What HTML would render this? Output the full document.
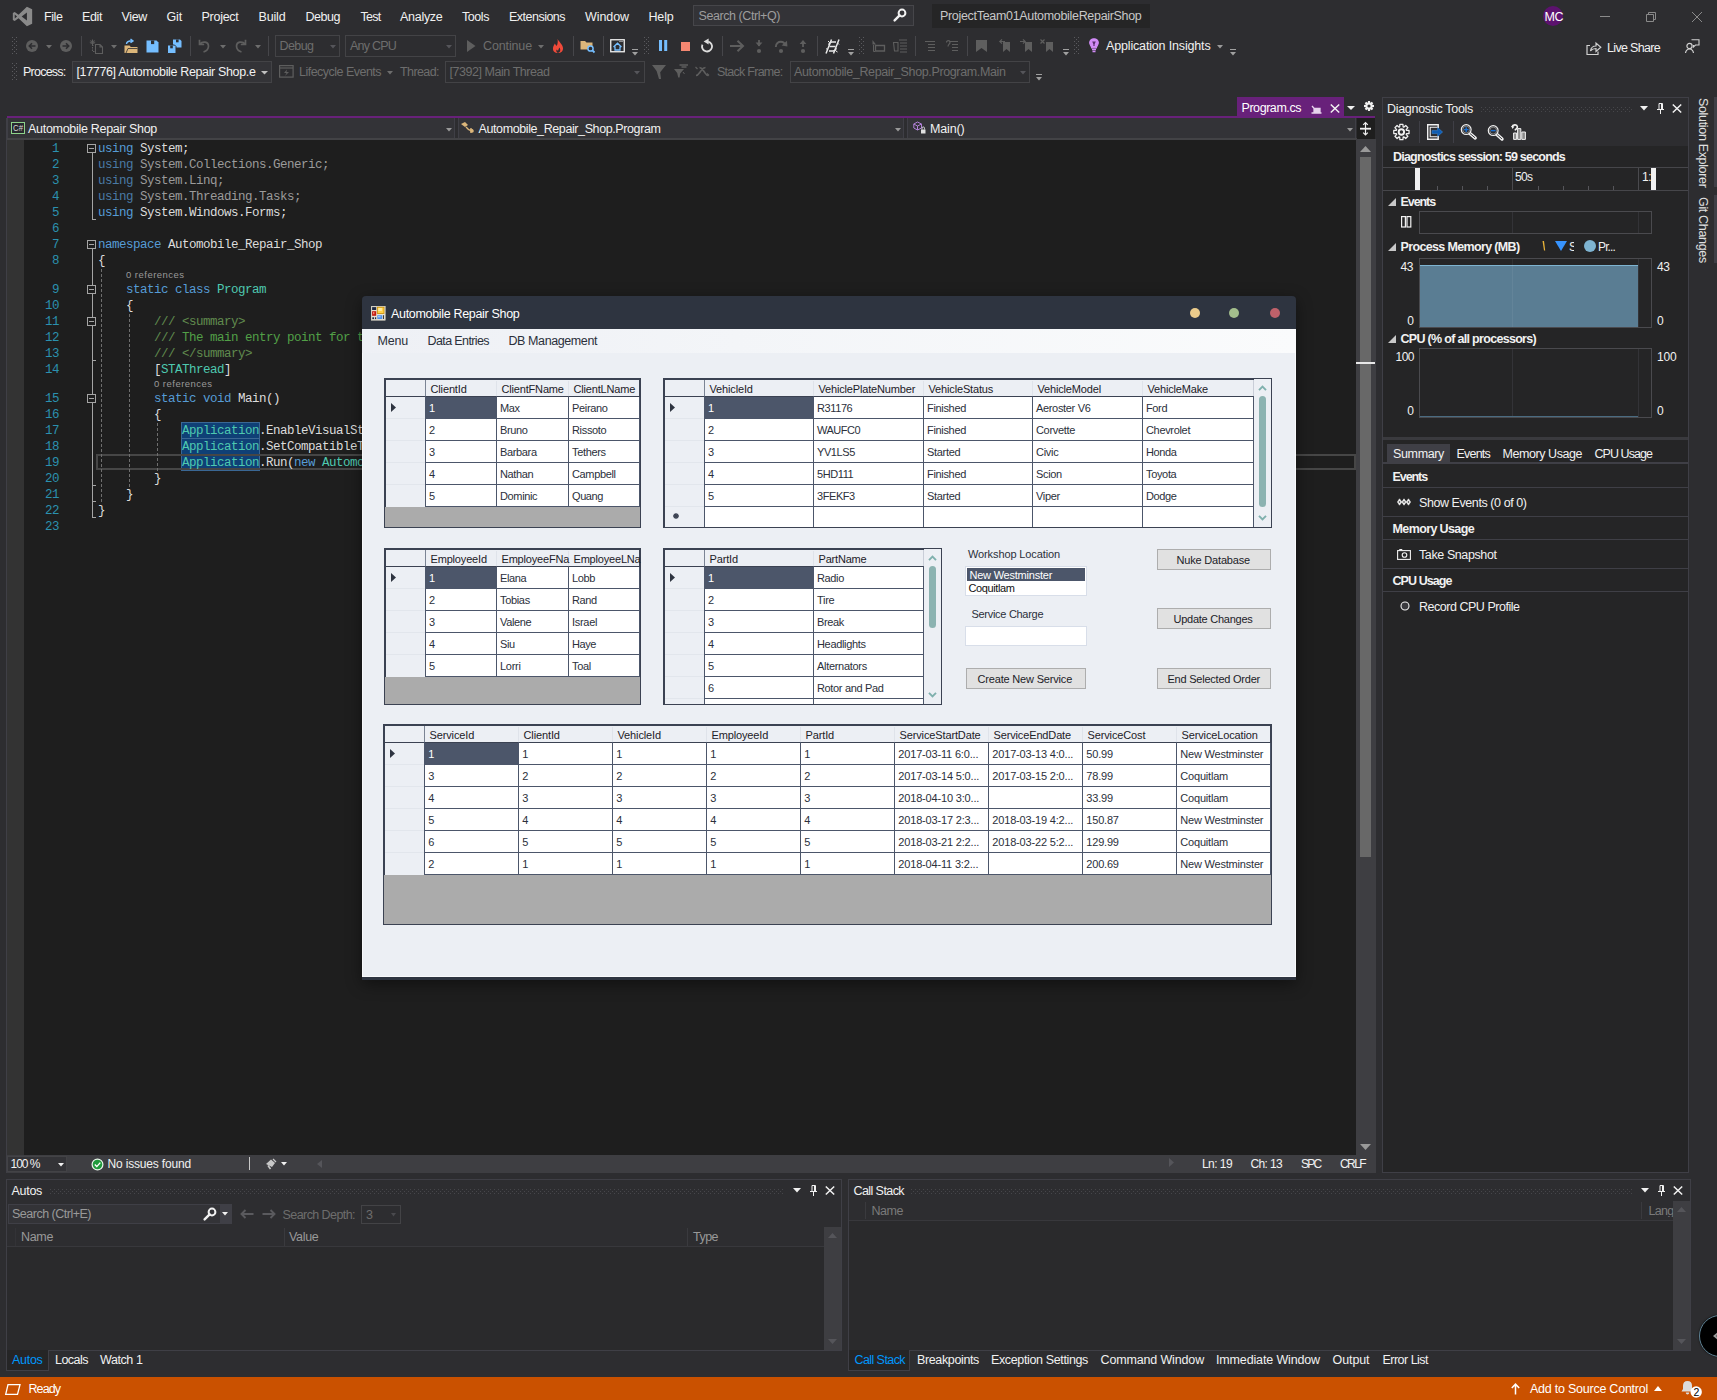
<!DOCTYPE html>
<html><head><meta charset="utf-8"><title>VS</title>
<style>
html,body{margin:0;padding:0;}
body{width:1717px;height:1400px;background:#2d2d30;overflow:hidden;position:relative;font-family:"Liberation Sans",sans-serif;font-size:12px;color:#f1f1f1;}
div,svg{position:absolute;box-sizing:border-box;}
svg{overflow:visible;}
</style></head><body>
<svg style="left:11.5px;top:5.5px;" width="21" height="21" viewBox="0 0 20 20"><path d="M14.2 0.8 L19.2 3 V17 L14.2 19.2 L6.2 11.6 L2.6 14.4 L0.8 13.4 V6.6 L2.6 5.6 L6.2 8.4 Z M14.2 6.2 L9.2 10 L14.2 13.8 Z M2.6 8 V12 L4.8 10 Z" fill="#8a8a8a" fill-rule="evenodd"/></svg>
<div style="top:10.75px;font-size:12.5px;line-height:12.5px;height:12.5px;color:#f1f1f1;white-space:pre;letter-spacing:-0.410px;left:44px;">File</div>
<div style="top:10.75px;font-size:12.5px;line-height:12.5px;height:12.5px;color:#f1f1f1;white-space:pre;letter-spacing:-0.385px;left:82px;">Edit</div>
<div style="top:10.75px;font-size:12.5px;line-height:12.5px;height:12.5px;color:#f1f1f1;white-space:pre;letter-spacing:-0.342px;left:121.5px;">View</div>
<div style="top:10.75px;font-size:12.5px;line-height:12.5px;height:12.5px;color:#f1f1f1;white-space:pre;letter-spacing:-0.158px;left:166.5px;">Git</div>
<div style="top:10.75px;font-size:12.5px;line-height:12.5px;height:12.5px;color:#f1f1f1;white-space:pre;letter-spacing:-0.272px;left:201.5px;">Project</div>
<div style="top:10.75px;font-size:12.5px;line-height:12.5px;height:12.5px;color:#f1f1f1;white-space:pre;letter-spacing:-0.159px;left:258.5px;">Build</div>
<div style="top:10.75px;font-size:12.5px;line-height:12.5px;height:12.5px;color:#f1f1f1;white-space:pre;letter-spacing:-0.466px;left:305.5px;">Debug</div>
<div style="top:10.75px;font-size:12.5px;line-height:12.5px;height:12.5px;color:#f1f1f1;white-space:pre;letter-spacing:-0.731px;left:360.5px;">Test</div>
<div style="top:10.75px;font-size:12.5px;line-height:12.5px;height:12.5px;color:#f1f1f1;white-space:pre;letter-spacing:-0.281px;left:400px;">Analyze</div>
<div style="top:10.75px;font-size:12.5px;line-height:12.5px;height:12.5px;color:#f1f1f1;white-space:pre;letter-spacing:-0.436px;left:462px;">Tools</div>
<div style="top:10.75px;font-size:12.5px;line-height:12.5px;height:12.5px;color:#f1f1f1;white-space:pre;letter-spacing:-0.514px;left:509px;">Extensions</div>
<div style="top:10.75px;font-size:12.5px;line-height:12.5px;height:12.5px;color:#f1f1f1;white-space:pre;letter-spacing:-0.076px;left:585px;">Window</div>
<div style="top:10.75px;font-size:12.5px;line-height:12.5px;height:12.5px;color:#f1f1f1;white-space:pre;letter-spacing:-0.177px;left:648.5px;">Help</div>
<div style="left:693px;top:5px;width:221px;height:21px;background:#333337;border:1px solid #46464a;"></div>
<div style="top:9.75px;font-size:12.5px;line-height:12.5px;height:12.5px;color:#9d9d9d;white-space:pre;letter-spacing:-0.424px;left:698.5px;">Search (Ctrl+Q)</div>
<svg style="left:893px;top:8px;" width="14" height="14" viewBox="0 0 14 14"><circle cx="9" cy="5" r="3.4" fill="none" stroke="#f1f1f1" stroke-width="2"/><path d="M6.6 7.4 L1.6 12.4" stroke="#f1f1f1" stroke-width="2.4" stroke-linecap="round"/></svg>
<div style="left:932px;top:4px;width:218px;height:24px;background:#252526;"></div>
<div style="top:9.75px;font-size:12.5px;line-height:12.5px;height:12.5px;color:#c8c8c8;white-space:pre;letter-spacing:-0.316px;left:940px;">ProjectTeam01AutomobileRepairShop</div>
<div style="left:1543px;top:6px;width:20px;height:20px;background:#5c126e;border-radius:50%;"></div>
<div style="top:10.75px;font-size:12.5px;line-height:12.5px;height:12.5px;color:#ffffff;white-space:pre;letter-spacing:-0.470px;left:1544.5px;">MC</div>
<svg style="left:1590px;top:4px;" width="120" height="24" viewBox="0 0 120 24"><path d="M10 12.5 H20" stroke="#8a8a8a" stroke-width="1" fill="none"/><path d="M56.5 10.5 H63.5 V17.5 H56.5 Z M58.5 10.5 V8.5 H65.5 V15.5 H63.5" stroke="#8a8a8a" stroke-width="1" fill="none"/><path d="M102 8 L112 18 M112 8 L102 18" stroke="#8a8a8a" stroke-width="1" fill="none"/></svg>
<svg style="left:12px;top:37px;" width="5" height="18" viewBox="0 0 5 18"><g fill="#5a5a5e"><rect x="0" y="0" width="1" height="1"/><rect x="4" y="0" width="1" height="1"/><rect x="2" y="2" width="1" height="1"/><rect x="0" y="4" width="1" height="1"/><rect x="4" y="4" width="1" height="1"/><rect x="2" y="6" width="1" height="1"/><rect x="0" y="8" width="1" height="1"/><rect x="4" y="8" width="1" height="1"/><rect x="2" y="10" width="1" height="1"/><rect x="0" y="12" width="1" height="1"/><rect x="4" y="12" width="1" height="1"/><rect x="2" y="14" width="1" height="1"/><rect x="0" y="16" width="1" height="1"/><rect x="4" y="16" width="1" height="1"/></g></svg>
<svg style="left:26px;top:40px;" width="12" height="12" viewBox="0 0 12 12"><circle cx="6" cy="6" r="6" fill="#5e5e5e"/><path d="M9.5 6 H3.5 M6 3.3 L3.3 6 L6 8.7" stroke="#2d2d30" stroke-width="1.6" fill="none"/></svg>
<svg style="left:46px;top:45px;" width="6" height="4" viewBox="0 0 6 4"><path d="M0 0 H6 L3.0 3.5 Z" fill="#6d6d6d"/></svg>
<svg style="left:60px;top:40px;" width="12" height="12" viewBox="0 0 12 12"><circle cx="6" cy="6" r="6" fill="#5e5e5e"/><path d="M2.5 6 H8.5 M6 3.3 L8.7 6 L6 8.7" stroke="#2d2d30" stroke-width="1.6" fill="none"/></svg>
<div style="left:81px;top:36px;width:1px;height:20px;background:#46464a;"></div>
<svg style="left:89px;top:39px;" width="15" height="15" viewBox="0 0 15 15"><path d="M6.5 5.5 H11 L13.5 8 V14.5 H6.5 Z M11 5.5 V8 H13.5" fill="none" stroke="#5e5e5e" stroke-width="1.1"/><path d="M4.5 6.5 H3.5 V12.5 H5.5" fill="none" stroke="#5e5e5e" stroke-width="1.1" stroke-dasharray="1.5 1"/><path d="M3.5 0.5 V6 M0.8 3.2 H6.2 M1.6 1.3 L5.4 5.1 M5.4 1.3 L1.6 5.1" stroke="#5e5e5e" stroke-width="1"/></svg>
<svg style="left:111px;top:45px;" width="6" height="4" viewBox="0 0 6 4"><path d="M0 0 H6 L3.0 3.5 Z" fill="#6d6d6d"/></svg>
<svg style="left:124px;top:39px;" width="14" height="15" viewBox="0 0 14 15"><path d="M0.5 6.5 H5.5 L6.8 8 H13.5 V14 H0.5 Z" fill="#dcb67a"/><path d="M2 14 L4 9.5 H13.5" fill="none" stroke="#2d2d30" stroke-width="0.8"/><path d="M2.5 5 C2.5 2.5 5 1.8 8.5 1.8 M6.5 0 L9 1.9 L6.5 3.8" stroke="#75beff" stroke-width="1.4" fill="none"/></svg>
<svg style="left:146px;top:40px;" width="13" height="13" viewBox="0 0 13 13"><path d="M0.5 0.5 H10.5 L12.5 2.5 V12.5 H0.5 Z" fill="#75beff"/><rect x="5" y="0.5" width="3.2" height="3.6" fill="#2d2d30"/></svg>
<svg style="left:167px;top:39px;" width="15" height="15" viewBox="0 0 15 15"><path d="M6 0.5 H13 L14.5 2 V8.5 H6 Z" fill="#75beff"/><rect x="9" y="0.5" width="2.6" height="2.8" fill="#2d2d30"/><path d="M0.5 6 H7.5 L9 7.5 V14.5 H0.5 Z" fill="#75beff" stroke="#2d2d30" stroke-width="1"/><rect x="3.2" y="6.5" width="2.6" height="2.8" fill="#2d2d30"/></svg>
<div style="left:190px;top:36px;width:1px;height:20px;background:#46464a;"></div>
<svg style="left:198px;top:39px;" width="13" height="14" viewBox="0 0 13 14"><path d="M1.5 0.8 V5.5 H6.2 M1.8 5.2 C4.5 1.8 10.5 2.5 10.5 7 C10.5 10 8 12.2 5.5 13" fill="none" stroke="#5e5e5e" stroke-width="1.7"/></svg>
<svg style="left:220px;top:45px;" width="6" height="4" viewBox="0 0 6 4"><path d="M0 0 H6 L3.0 3.5 Z" fill="#6d6d6d"/></svg>
<svg style="left:234px;top:39px;" width="13" height="14" viewBox="0 0 13 14"><path d="M11.5 0.8 V5.5 H6.8 M11.2 5.2 C8.5 1.8 2.5 2.5 2.5 7 C2.5 10 5 12.2 7.5 13" fill="none" stroke="#5e5e5e" stroke-width="1.7"/></svg>
<svg style="left:255px;top:45px;" width="6" height="4" viewBox="0 0 6 4"><path d="M0 0 H6 L3.0 3.5 Z" fill="#6d6d6d"/></svg>
<div style="left:268px;top:36px;width:1px;height:20px;background:#46464a;"></div>
<div style="left:275px;top:35px;width:65px;height:22px;background:#2d2d30;border:1px solid #434346;"></div>
<div style="top:39.75px;font-size:12.5px;line-height:12.5px;height:12.5px;color:#6d6d6d;white-space:pre;letter-spacing:-0.566px;left:279.5px;">Debug</div>
<svg style="left:330px;top:45px;" width="6" height="4" viewBox="0 0 6 4"><path d="M0 0 H6 L3.0 3.5 Z" fill="#55555a"/></svg>
<div style="left:345px;top:35px;width:111px;height:22px;background:#2d2d30;border:1px solid #434346;"></div>
<div style="top:39.75px;font-size:12.5px;line-height:12.5px;height:12.5px;color:#6d6d6d;white-space:pre;letter-spacing:-0.772px;left:350px;">Any CPU</div>
<svg style="left:446px;top:45px;" width="6" height="4" viewBox="0 0 6 4"><path d="M0 0 H6 L3.0 3.5 Z" fill="#55555a"/></svg>
<svg style="left:467px;top:40px;" width="9" height="12" viewBox="0 0 9 12"><path d="M0 0 L8.5 6 L0 12 Z" fill="#5e5e5e"/></svg>
<div style="top:39.75px;font-size:12.5px;line-height:12.5px;height:12.5px;color:#6d6d6d;white-space:pre;letter-spacing:-0.129px;left:483px;">Continue</div>
<svg style="left:538px;top:45px;" width="6" height="4" viewBox="0 0 6 4"><path d="M0 0 H6 L3.0 3.5 Z" fill="#6d6d6d"/></svg>
<svg style="left:552px;top:39px;" width="12" height="14" viewBox="0 0 12 14"><path d="M5.5 0 C7 3 10.5 5 11 9 C11.3 12 9 14 6 14 C3 14 0.5 12 1 9 C1.2 7 2.3 6 2.8 4.5 C3.8 6 4.2 6.5 4.6 7 C5.8 5 6 2.5 5.5 0 Z" fill="#f04a3a"/><path d="M6 14 C4.5 13.5 4 12 4.5 10.5 C5 11.3 5.5 11.5 6 11.7 C6.3 10.5 7 9.5 7.5 8.5 C8.5 10.5 9 13 6 14Z" fill="#2d2d30"/></svg>
<div style="left:573px;top:36px;width:1px;height:20px;background:#46464a;"></div>
<svg style="left:580px;top:39px;" width="15" height="15" viewBox="0 0 15 15"><path d="M0.5 2 H5 L6.5 3.5 H12.5 V10.5 H0.5 Z" fill="#dcb67a"/><circle cx="10.5" cy="9.5" r="2.6" fill="#2d2d30" stroke="#75beff" stroke-width="1.5"/><path d="M12.4 11.4 L14.5 13.5" stroke="#75beff" stroke-width="1.8"/></svg>
<div style="left:603px;top:36px;width:1px;height:20px;background:#46464a;"></div>
<svg style="left:610px;top:39px;" width="15" height="14" viewBox="0 0 15 14"><rect x="0.75" y="0.75" width="13.5" height="12" fill="none" stroke="#f1f1f1" stroke-width="1.3"/><path d="M9.5 2.5 H12.5" stroke="#f1f1f1" stroke-width="1" stroke-dasharray="1 1"/><path d="M3.5 8 L7.5 4.2 L11.5 8 M5 7.5 V11 H10 V7.5" fill="none" stroke="#75beff" stroke-width="1.3"/></svg>
<svg style="left:632px;top:49px;" width="7" height="7" viewBox="0 0 7 7"><path d="M0 0.5 H6" stroke="#a0a0a0" stroke-width="1"/><path d="M0 3 H6 L3 6.5 Z" fill="#a0a0a0"/></svg>
<svg style="left:644px;top:37px;" width="5" height="18" viewBox="0 0 5 18"><g fill="#5a5a5e"><rect x="0" y="0" width="1" height="1"/><rect x="4" y="0" width="1" height="1"/><rect x="2" y="2" width="1" height="1"/><rect x="0" y="4" width="1" height="1"/><rect x="4" y="4" width="1" height="1"/><rect x="2" y="6" width="1" height="1"/><rect x="0" y="8" width="1" height="1"/><rect x="4" y="8" width="1" height="1"/><rect x="2" y="10" width="1" height="1"/><rect x="0" y="12" width="1" height="1"/><rect x="4" y="12" width="1" height="1"/><rect x="2" y="14" width="1" height="1"/><rect x="0" y="16" width="1" height="1"/><rect x="4" y="16" width="1" height="1"/></g></svg>
<svg style="left:659px;top:40px;" width="9" height="11" viewBox="0 0 9 11"><rect x="0" y="0" width="3" height="11" fill="#75beff"/><rect x="5.2" y="0" width="3" height="11" fill="#75beff"/></svg>
<div style="left:680.5px;top:41.5px;width:9px;height:9px;background:#f48771;"></div>
<svg style="left:700px;top:38px;" width="14" height="15" viewBox="0 0 14 15"><path d="M8.2 3.6 A5 5 0 1 1 2.4 6.6" fill="none" stroke="#dcdcdc" stroke-width="1.8"/><path d="M8.6 0.6 L3.6 3.6 L8.6 6.6 Z" fill="#dcdcdc"/></svg>
<div style="left:722px;top:36px;width:1px;height:20px;background:#46464a;"></div>
<svg style="left:730px;top:40px;" width="15" height="12" viewBox="0 0 15 12"><path d="M0 6 H12.5" fill="none" stroke="#5e5e5e" stroke-width="2"/><path d="M7.5 0.8 L13 6 L7.5 11.2" fill="none" stroke="#5e5e5e" stroke-width="2"/></svg>
<svg style="left:755px;top:39px;" width="8" height="15" viewBox="0 0 8 15"><path d="M4 1 V7" fill="none" stroke="#5e5e5e" stroke-width="1.8"/><path d="M0.6 3.6 L4 7.6 L7.4 3.6 Z" fill="#5e5e5e"/><circle cx="4" cy="12" r="2.1" fill="#5e5e5e"/></svg>
<svg style="left:774px;top:39px;" width="14" height="15" viewBox="0 0 14 15"><path d="M1.8 8 C1.8 4 4.5 2.8 6.8 2.8 C9 2.8 10.8 4 11.2 6.5" fill="none" stroke="#5e5e5e" stroke-width="2"/><path d="M7.6 6.6 L13.4 7.6 L13 1.8 Z" fill="#5e5e5e"/><circle cx="7" cy="12" r="2.1" fill="#5e5e5e"/></svg>
<svg style="left:799px;top:39px;" width="8" height="15" viewBox="0 0 8 15"><path d="M4 8 V3" fill="none" stroke="#5e5e5e" stroke-width="1.8"/><path d="M0.6 5 L4 1 L7.4 5 Z" fill="#5e5e5e"/><circle cx="4" cy="12" r="2.1" fill="#5e5e5e"/></svg>
<div style="left:817px;top:36px;width:1px;height:20px;background:#46464a;"></div>
<svg style="left:825px;top:39px;" width="15" height="15" viewBox="0 0 15 15"><path d="M4 6 C4 4 5 3 7 3 H11 M11 9 C11 11 10 12 8 12 H4 M4.5 7.5 H10.5" fill="none" stroke="#e8e8e8" stroke-width="1.4"/><path d="M1 14.5 L6.5 0.5 M8.5 14.5 L14 0.5" stroke="#e8e8e8" stroke-width="1.5"/><path d="M1 9.5 L3 11 M12.5 4 L14 5.5 M3 2 L4 3 M11 12 L12.5 13" stroke="#e8e8e8" stroke-width="1"/></svg>
<svg style="left:848px;top:49px;" width="7" height="7" viewBox="0 0 7 7"><path d="M0 0.5 H6" stroke="#a0a0a0" stroke-width="1"/><path d="M0 3 H6 L3 6.5 Z" fill="#a0a0a0"/></svg>
<svg style="left:859px;top:37px;" width="5" height="18" viewBox="0 0 5 18"><g fill="#5a5a5e"><rect x="0" y="0" width="1" height="1"/><rect x="4" y="0" width="1" height="1"/><rect x="2" y="2" width="1" height="1"/><rect x="0" y="4" width="1" height="1"/><rect x="4" y="4" width="1" height="1"/><rect x="2" y="6" width="1" height="1"/><rect x="0" y="8" width="1" height="1"/><rect x="4" y="8" width="1" height="1"/><rect x="2" y="10" width="1" height="1"/><rect x="0" y="12" width="1" height="1"/><rect x="4" y="12" width="1" height="1"/><rect x="2" y="14" width="1" height="1"/><rect x="0" y="16" width="1" height="1"/><rect x="4" y="16" width="1" height="1"/></g></svg>
<svg style="left:872px;top:39px;" width="14" height="14" viewBox="0 0 14 14"><path d="M0.5 1 L4 5.5 L0.5 5.5 Z" fill="#5e5e5e"/><path d="M3.5 6.5 H12.5 V12 H3.5 Z" fill="none" stroke="#5e5e5e" stroke-width="1.3"/><path d="M1.5 6 V12.5 H3" stroke="#5e5e5e" fill="none" stroke-width="1"/></svg>
<svg style="left:893px;top:39px;" width="15" height="14" viewBox="0 0 15 14"><path d="M6 1 H14 M7 4 H14 M7 7 H14 M7 10 H14 M7 13 H14" stroke="#5e5e5e" stroke-width="1.2"/><path d="M0.5 3.5 H5 V12 H1.5 Z" fill="none" stroke="#5e5e5e" stroke-width="1.1"/></svg>
<div style="left:915px;top:36px;width:1px;height:20px;background:#46464a;"></div>
<svg style="left:925px;top:41px;" width="11" height="11" viewBox="0 0 11 11"><path d="M0 0.5 H10 M3 3.5 H10 M3 6.5 H10 M3 9.5 H10" stroke="#5e5e5e" stroke-width="1.2"/></svg>
<svg style="left:946px;top:40px;" width="13" height="12" viewBox="0 0 13 12"><path d="M4 1.5 H12 M6 4.5 H12 M6 7.5 H12 M6 10.5 H12" stroke="#5e5e5e" stroke-width="1.2"/><path d="M0.5 2.5 C0.5 0 4 0 4 2.5 C4 4 2 4.5 2 6.5" stroke="#5e5e5e" stroke-width="1.2" fill="none"/></svg>
<div style="left:967px;top:36px;width:1px;height:20px;background:#46464a;"></div>
<svg style="left:976px;top:40px;" width="11" height="12" viewBox="0 0 11 12"><path d="M0 0 H11 V12 L5.5 8 L0 12 Z" fill="#5e5e5e"/></svg>
<svg style="left:999px;top:39px;" width="12" height="13" viewBox="0 0 12 13"><path d="M4 3 H11 V13 L7.5 10 L4 13 Z" fill="#5e5e5e"/><path d="M6 2.5 H0.8 M3 0.3 L0.8 2.5 L3 4.7" stroke="#5e5e5e" stroke-width="1.2" fill="none"/></svg>
<svg style="left:1020px;top:39px;" width="12" height="13" viewBox="0 0 12 13"><path d="M5 3 H12 V13 L8.5 10 L5 13 Z" fill="#5e5e5e"/><path d="M0 2.5 H5.2 M3 0.3 L5.2 2.5 L3 4.7" stroke="#5e5e5e" stroke-width="1.2" fill="none"/></svg>
<svg style="left:1040px;top:39px;" width="13" height="13" viewBox="0 0 13 13"><path d="M6 3 H13 V13 L9.5 10 L6 13 Z" fill="#5e5e5e"/><path d="M0.5 0.5 L4.5 4.5 M4.5 0.5 L0.5 4.5" stroke="#5e5e5e" stroke-width="1.2" fill="none"/></svg>
<svg style="left:1063px;top:49px;" width="7" height="7" viewBox="0 0 7 7"><path d="M0 0.5 H6" stroke="#a0a0a0" stroke-width="1"/><path d="M0 3 H6 L3 6.5 Z" fill="#a0a0a0"/></svg>
<svg style="left:1074px;top:37px;" width="5" height="18" viewBox="0 0 5 18"><g fill="#5a5a5e"><rect x="0" y="0" width="1" height="1"/><rect x="4" y="0" width="1" height="1"/><rect x="2" y="2" width="1" height="1"/><rect x="0" y="4" width="1" height="1"/><rect x="4" y="4" width="1" height="1"/><rect x="2" y="6" width="1" height="1"/><rect x="0" y="8" width="1" height="1"/><rect x="4" y="8" width="1" height="1"/><rect x="2" y="10" width="1" height="1"/><rect x="0" y="12" width="1" height="1"/><rect x="4" y="12" width="1" height="1"/><rect x="2" y="14" width="1" height="1"/><rect x="0" y="16" width="1" height="1"/><rect x="4" y="16" width="1" height="1"/></g></svg>
<svg style="left:1089px;top:38px;" width="10" height="15" viewBox="0 0 10 15"><path d="M5 0.8 C7.6 0.8 9.3 2.6 9.3 4.8 C9.3 6.8 7.6 7.6 7.3 9.8 H2.7 C2.4 7.6 0.7 6.8 0.7 4.8 C0.7 2.6 2.4 0.8 5 0.8 Z" fill="#d18bf7" stroke="#d18bf7" stroke-width="1.2"/><path d="M3.2 3.6 H6.8 L5.6 6.2 V8 H4.4 V6.2 Z" fill="#5a2d6e"/><path d="M3 11.5 H7 M3.5 13.5 H6.5" stroke="#d18bf7" stroke-width="1.3"/></svg>
<div style="top:39.75px;font-size:12.5px;line-height:12.5px;height:12.5px;color:#f1f1f1;white-space:pre;letter-spacing:-0.160px;left:1106px;">Application Insights</div>
<svg style="left:1217px;top:45px;" width="6" height="4" viewBox="0 0 6 4"><path d="M0 0 H6 L3.0 3.5 Z" fill="#9a9a9a"/></svg>
<svg style="left:1230px;top:49px;" width="7" height="7" viewBox="0 0 7 7"><path d="M0 0.5 H6" stroke="#a0a0a0" stroke-width="1"/><path d="M0 3 H6 L3 6.5 Z" fill="#a0a0a0"/></svg>
<svg style="left:1586px;top:41px;" width="16" height="14" viewBox="0 0 16 14"><path d="M4 4.5 H1 V13.5 H12 V10.5" fill="none" stroke="#d0d0d0" stroke-width="1.2"/><path d="M4.5 10 C5 6.5 7.5 5 10 5 V2 L14.8 6.2 L10 10.4 V7.5 C8 7.5 6 8 4.5 10 Z" fill="none" stroke="#d0d0d0" stroke-width="1.2"/></svg>
<div style="top:41.75px;font-size:12.5px;line-height:12.5px;height:12.5px;color:#f1f1f1;white-space:pre;letter-spacing:-0.676px;left:1607px;">Live Share</div>
<svg style="left:1685px;top:39px;" width="15" height="15" viewBox="0 0 15 15"><circle cx="4.5" cy="7" r="2.6" fill="none" stroke="#d0d0d0" stroke-width="1.2"/><path d="M0.5 14 C1 11 3 10 4.5 10 C6 10 8 11 8.5 14" fill="none" stroke="#d0d0d0" stroke-width="1.2"/><path d="M6.5 0.7 H14 V6 H10.5 L8.5 8 V6" fill="none" stroke="#d0d0d0" stroke-width="1.1"/></svg>
<svg style="left:12px;top:63px;" width="5" height="18" viewBox="0 0 5 18"><g fill="#5a5a5e"><rect x="0" y="0" width="1" height="1"/><rect x="4" y="0" width="1" height="1"/><rect x="2" y="2" width="1" height="1"/><rect x="0" y="4" width="1" height="1"/><rect x="4" y="4" width="1" height="1"/><rect x="2" y="6" width="1" height="1"/><rect x="0" y="8" width="1" height="1"/><rect x="4" y="8" width="1" height="1"/><rect x="2" y="10" width="1" height="1"/><rect x="0" y="12" width="1" height="1"/><rect x="4" y="12" width="1" height="1"/><rect x="2" y="14" width="1" height="1"/><rect x="0" y="16" width="1" height="1"/><rect x="4" y="16" width="1" height="1"/></g></svg>
<div style="top:65.75px;font-size:12.5px;line-height:12.5px;height:12.5px;color:#f1f1f1;white-space:pre;letter-spacing:-0.766px;left:23px;">Process:</div>
<div style="left:72px;top:61px;width:200px;height:22px;background:#333337;border:1px solid #434346;"></div>
<div style="top:65.75px;font-size:12.5px;line-height:12.5px;height:12.5px;color:#f1f1f1;white-space:pre;letter-spacing:-0.356px;left:76.5px;">[17776] Automobile Repair Shop.e</div>
<svg style="left:261px;top:71px;" width="7" height="4" viewBox="0 0 7 4"><path d="M0 0 H7 L3.5 3.5 Z" fill="#c0c0c0"/></svg>
<svg style="left:279px;top:65px;" width="15" height="13" viewBox="0 0 15 13"><rect x="0.6" y="0.6" width="13.5" height="11.5" fill="none" stroke="#5e5e5e" stroke-width="1.2"/><path d="M0.6 3 H14" stroke="#5e5e5e" stroke-width="1.2"/><path d="M8 4.5 L5 8 H7.5 L6 11 L10 7 H7.5 Z" fill="#5e5e5e"/></svg>
<div style="top:65.75px;font-size:12.5px;line-height:12.5px;height:12.5px;color:#6d6d6d;white-space:pre;letter-spacing:-0.520px;left:299px;">Lifecycle Events</div>
<svg style="left:387px;top:71px;" width="6" height="4" viewBox="0 0 6 4"><path d="M0 0 H6 L3.0 3.5 Z" fill="#6d6d6d"/></svg>
<div style="top:65.75px;font-size:12.5px;line-height:12.5px;height:12.5px;color:#6d6d6d;white-space:pre;letter-spacing:-0.582px;left:400px;">Thread:</div>
<div style="left:445px;top:61px;width:200px;height:22px;background:#2d2d30;border:1px solid #434346;"></div>
<div style="top:65.75px;font-size:12.5px;line-height:12.5px;height:12.5px;color:#6d6d6d;white-space:pre;letter-spacing:-0.453px;left:449.5px;">[7392] Main Thread</div>
<svg style="left:634px;top:71px;" width="6" height="4" viewBox="0 0 6 4"><path d="M0 0 H6 L3.0 3.5 Z" fill="#55555a"/></svg>
<svg style="left:652px;top:65px;" width="14" height="15" viewBox="0 0 14 15"><path d="M0 0 H14 L8.2 7.2 L9 14 H7 L4.6 6 Z" fill="#5e5e5e"/></svg>
<svg style="left:674px;top:64px;" width="15" height="14" viewBox="0 0 15 14"><path d="M0 5 H10 L6.2 9.4 L5.6 13.5 H4.2 L3.2 9 Z" fill="#5e5e5e"/><path d="M5.5 1 H14 M7.5 3 H12.5" stroke="#5e5e5e" stroke-width="1.4"/><path d="M9 8 L10.5 10" stroke="#5e5e5e" stroke-width="1"/></svg>
<svg style="left:695px;top:66px;" width="15" height="11" viewBox="0 0 15 11"><path d="M1 9.5 C3 9.5 4 7.5 5.5 5.5 C7 3.5 8 1.5 10.5 1.5 M4.5 1.5 C6.5 1.5 7.5 3.5 9 5.5 C10.5 7.5 11 9.5 13.5 9.5" fill="none" stroke="#5e5e5e" stroke-width="1.7"/><path d="M0.5 1 L2.5 3 M12 7.5 L14 9.5" stroke="#5e5e5e" stroke-width="1.2"/></svg>
<div style="top:65.75px;font-size:12.5px;line-height:12.5px;height:12.5px;color:#6d6d6d;white-space:pre;letter-spacing:-0.735px;left:717px;">Stack Frame:</div>
<div style="left:790px;top:61px;width:240px;height:22px;background:#2d2d30;border:1px solid #434346;"></div>
<div style="top:65.75px;font-size:12.5px;line-height:12.5px;height:12.5px;color:#6d6d6d;white-space:pre;letter-spacing:-0.369px;left:794px;">Automobile_Repair_Shop.Program.Main</div>
<svg style="left:1020px;top:71px;" width="6" height="4" viewBox="0 0 6 4"><path d="M0 0 H6 L3.0 3.5 Z" fill="#55555a"/></svg>
<svg style="left:1036px;top:74px;" width="7" height="7" viewBox="0 0 7 7"><path d="M0 0.5 H6" stroke="#a0a0a0" stroke-width="1"/><path d="M0 3 H6 L3 6.5 Z" fill="#a0a0a0"/></svg>
<div style="left:1237px;top:97px;width:107px;height:20px;background:#68217a;"></div>
<div style="top:101.75px;font-size:12.5px;line-height:12.5px;height:12.5px;color:#ffffff;white-space:pre;letter-spacing:-0.440px;left:1241.5px;">Program.cs</div>
<svg style="left:1311px;top:104.5px;" width="11" height="9" viewBox="0 0 11 9"><path d="M0.5 8 H10.5 M3 8 V3.5 H9 V8 M3.2 3.5 L1 1 M5 5 H8" stroke="#e6d3ec" stroke-width="1.3" fill="none"/><rect x="3" y="3.5" width="6" height="4.5" fill="#e6d3ec"/></svg>
<svg style="left:1330px;top:103.5px;" width="10" height="9" viewBox="0 0 10 9"><path d="M0.8 0.5 L9.2 8.5 M9.2 0.5 L0.8 8.5" stroke="#f1f1f1" stroke-width="1.5"/></svg>
<svg style="left:1347px;top:106px;" width="8" height="4" viewBox="0 0 8 4"><path d="M0 0 H8 L4 4 Z" fill="#f1f1f1"/></svg>
<svg style="left:1364px;top:101px;" width="10" height="10" viewBox="0 0 10 10"><path d="M8.28 3.77 L10.00 3.99 L10.00 6.01 L8.28 6.23 L8.19 6.44 L9.25 7.82 L7.82 9.25 L6.44 8.19 L6.23 8.28 L6.01 10.00 L3.99 10.00 L3.77 8.28 L3.56 8.19 L2.18 9.25 L0.75 7.82 L1.81 6.44 L1.72 6.23 L0.00 6.01 L0.00 3.99 L1.72 3.77 L1.81 3.56 L0.75 2.18 L2.18 0.75 L3.56 1.81 L3.77 1.72 L3.99 0.00 L6.01 0.00 L6.23 1.72 L6.44 1.81 L7.82 0.75 L9.25 2.18 L8.19 3.56 Z" fill="#f1f1f1"/><circle cx="5" cy="5" r="1.6" fill="#2d2d30"/></svg>
<div style="left:7px;top:116px;width:1368px;height:2px;background:#68217a;"></div>
<div style="left:7px;top:118px;width:1350px;height:22px;background:#2d2d30;"></div>
<div style="left:7px;top:118px;width:448px;height:21px;background:#333337;border:1px solid #3f3f46;border-top:none;"></div>
<div style="left:458px;top:118px;width:446px;height:21px;background:#333337;border:1px solid #3f3f46;border-top:none;"></div>
<div style="left:907px;top:118px;width:449px;height:21px;background:#333337;border:1px solid #3f3f46;border-top:none;"></div>
<div style="left:7px;top:138px;width:1350px;height:2px;background:#434346;"></div>
<svg style="left:11px;top:122px;" width="14" height="12" viewBox="0 0 14 12"><rect x="0.5" y="0.5" width="13" height="11" fill="#28282e" stroke="#8dd28a" stroke-width="1"/><text x="2" y="9.4" font-size="8.6" font-family="Liberation Sans" fill="#d8d8d8" textLength="10" lengthAdjust="spacingAndGlyphs">C#</text></svg>
<div style="top:122.75px;font-size:12.5px;line-height:12.5px;height:12.5px;color:#f1f1f1;white-space:pre;letter-spacing:-0.295px;left:28px;">Automobile Repair Shop</div>
<svg style="left:446px;top:128px;" width="6" height="4" viewBox="0 0 6 4"><path d="M0 0 H6 L3.0 3.5 Z" fill="#999"/></svg>
<svg style="left:460px;top:121px;" width="16" height="14" viewBox="0 0 16 14"><path d="M1 3 L5 1 L8 4 L5 6 Z" fill="#dcb67a"/><path d="M6 6 L9 9 M9 9 H13 M11 7 V12" stroke="#dcb67a" stroke-width="1.4" fill="none"/><circle cx="12" cy="10" r="1.8" fill="#dcb67a"/></svg>
<div style="top:122.75px;font-size:12.5px;line-height:12.5px;height:12.5px;color:#f1f1f1;white-space:pre;letter-spacing:-0.395px;left:478.5px;">Automobile_Repair_Shop.Program</div>
<svg style="left:895px;top:128px;" width="6" height="4" viewBox="0 0 6 4"><path d="M0 0 H6 L3.0 3.5 Z" fill="#999"/></svg>
<svg style="left:913px;top:121px;" width="14" height="14" viewBox="0 0 14 14"><path d="M4.5 1 L8.5 3 V7 L4.5 9 L0.8 7 V3 Z M0.8 3 L4.5 5 L8.5 3 M4.5 5 V9" fill="none" stroke="#b180d7" stroke-width="1"/><rect x="8" y="8.5" width="4.5" height="4" fill="#e0e0e0"/><path d="M9 8.5 V7.2 A1.2 1.2 0 0 1 11.5 7.2 V8.5" stroke="#e0e0e0" stroke-width="0.9" fill="none"/></svg>
<div style="top:122.75px;font-size:12.5px;line-height:12.5px;height:12.5px;color:#f1f1f1;white-space:pre;letter-spacing:-0.153px;left:930px;">Main()</div>
<svg style="left:1347px;top:128px;" width="6" height="4" viewBox="0 0 6 4"><path d="M0 0 H6 L3.0 3.5 Z" fill="#999"/></svg>
<div style="left:1357px;top:118px;width:18px;height:21px;background:#1e1e1e;"></div>
<svg style="left:1360px;top:122px;" width="11" height="14" viewBox="0 0 11 14"><path d="M0 6.7 H11" stroke="#f1f1f1" stroke-width="1.8"/><path d="M5.5 0.6 V12.8 M3.2 2.8 L5.5 0.5 L7.8 2.8 M3.2 10.6 L5.5 12.9 L7.8 10.6" fill="none" stroke="#f1f1f1" stroke-width="1.2"/></svg>
<div style="left:6px;top:118px;width:1px;height:1055px;background:#3f3f46;"></div>
<div style="left:7px;top:140px;width:1349px;height:1015px;background:#1e1e1e;"></div>
<div style="left:7px;top:140px;width:17px;height:1015px;background:#333333;"></div>
<div style="left:1356px;top:139px;width:20px;height:1016px;background:#3e3e42;"></div>
<div style="left:1360px;top:157px;width:11px;height:700px;background:#686868;"></div>
<svg style="left:1360px;top:146px;" width="11" height="6" viewBox="0 0 11 6"><path d="M0 6 L5.5 0 L11 6 Z" fill="#999999"/></svg>
<svg style="left:1360px;top:1144px;" width="11" height="6" viewBox="0 0 11 6"><path d="M0 0 L5.5 6 L11 0 Z" fill="#999999"/></svg>
<div style="left:1356px;top:362px;width:19px;height:2px;background:#e8e8e8;"></div>
<div style="top:142.75px;font-size:12.5px;line-height:12.5px;height:12.5px;color:#2b91af;white-space:pre;font-family:'Liberation Mono',monospace;left:52.0px;letter-spacing:-0.5012px;">1</div>
<div style="top:158.75px;font-size:12.5px;line-height:12.5px;height:12.5px;color:#2b91af;white-space:pre;font-family:'Liberation Mono',monospace;left:52.0px;letter-spacing:-0.5012px;">2</div>
<div style="top:174.75px;font-size:12.5px;line-height:12.5px;height:12.5px;color:#2b91af;white-space:pre;font-family:'Liberation Mono',monospace;left:52.0px;letter-spacing:-0.5012px;">3</div>
<div style="top:190.75px;font-size:12.5px;line-height:12.5px;height:12.5px;color:#2b91af;white-space:pre;font-family:'Liberation Mono',monospace;left:52.0px;letter-spacing:-0.5012px;">4</div>
<div style="top:206.75px;font-size:12.5px;line-height:12.5px;height:12.5px;color:#2b91af;white-space:pre;font-family:'Liberation Mono',monospace;left:52.0px;letter-spacing:-0.5012px;">5</div>
<div style="top:222.75px;font-size:12.5px;line-height:12.5px;height:12.5px;color:#2b91af;white-space:pre;font-family:'Liberation Mono',monospace;left:52.0px;letter-spacing:-0.5012px;">6</div>
<div style="top:238.75px;font-size:12.5px;line-height:12.5px;height:12.5px;color:#2b91af;white-space:pre;font-family:'Liberation Mono',monospace;left:52.0px;letter-spacing:-0.5012px;">7</div>
<div style="top:254.75px;font-size:12.5px;line-height:12.5px;height:12.5px;color:#2b91af;white-space:pre;font-family:'Liberation Mono',monospace;left:52.0px;letter-spacing:-0.5012px;">8</div>
<div style="top:283.75px;font-size:12.5px;line-height:12.5px;height:12.5px;color:#2b91af;white-space:pre;font-family:'Liberation Mono',monospace;left:52.0px;letter-spacing:-0.5012px;">9</div>
<div style="top:299.75px;font-size:12.5px;line-height:12.5px;height:12.5px;color:#2b91af;white-space:pre;font-family:'Liberation Mono',monospace;left:45.0px;letter-spacing:-0.5012px;">10</div>
<div style="top:315.75px;font-size:12.5px;line-height:12.5px;height:12.5px;color:#2b91af;white-space:pre;font-family:'Liberation Mono',monospace;left:45.0px;letter-spacing:-0.5012px;">11</div>
<div style="top:331.75px;font-size:12.5px;line-height:12.5px;height:12.5px;color:#2b91af;white-space:pre;font-family:'Liberation Mono',monospace;left:45.0px;letter-spacing:-0.5012px;">12</div>
<div style="top:347.75px;font-size:12.5px;line-height:12.5px;height:12.5px;color:#2b91af;white-space:pre;font-family:'Liberation Mono',monospace;left:45.0px;letter-spacing:-0.5012px;">13</div>
<div style="top:363.75px;font-size:12.5px;line-height:12.5px;height:12.5px;color:#2b91af;white-space:pre;font-family:'Liberation Mono',monospace;left:45.0px;letter-spacing:-0.5012px;">14</div>
<div style="top:392.75px;font-size:12.5px;line-height:12.5px;height:12.5px;color:#2b91af;white-space:pre;font-family:'Liberation Mono',monospace;left:45.0px;letter-spacing:-0.5012px;">15</div>
<div style="top:408.75px;font-size:12.5px;line-height:12.5px;height:12.5px;color:#2b91af;white-space:pre;font-family:'Liberation Mono',monospace;left:45.0px;letter-spacing:-0.5012px;">16</div>
<div style="top:424.75px;font-size:12.5px;line-height:12.5px;height:12.5px;color:#2b91af;white-space:pre;font-family:'Liberation Mono',monospace;left:45.0px;letter-spacing:-0.5012px;">17</div>
<div style="top:440.75px;font-size:12.5px;line-height:12.5px;height:12.5px;color:#2b91af;white-space:pre;font-family:'Liberation Mono',monospace;left:45.0px;letter-spacing:-0.5012px;">18</div>
<div style="top:456.75px;font-size:12.5px;line-height:12.5px;height:12.5px;color:#2b91af;white-space:pre;font-family:'Liberation Mono',monospace;left:45.0px;letter-spacing:-0.5012px;">19</div>
<div style="top:472.75px;font-size:12.5px;line-height:12.5px;height:12.5px;color:#2b91af;white-space:pre;font-family:'Liberation Mono',monospace;left:45.0px;letter-spacing:-0.5012px;">20</div>
<div style="top:488.75px;font-size:12.5px;line-height:12.5px;height:12.5px;color:#2b91af;white-space:pre;font-family:'Liberation Mono',monospace;left:45.0px;letter-spacing:-0.5012px;">21</div>
<div style="top:504.75px;font-size:12.5px;line-height:12.5px;height:12.5px;color:#2b91af;white-space:pre;font-family:'Liberation Mono',monospace;left:45.0px;letter-spacing:-0.5012px;">22</div>
<div style="top:520.75px;font-size:12.5px;line-height:12.5px;height:12.5px;color:#2b91af;white-space:pre;font-family:'Liberation Mono',monospace;left:45.0px;letter-spacing:-0.5012px;">23</div>
<div style="top:142.75px;font-size:12.5px;line-height:12.5px;height:12.5px;color:#569cd6;white-space:pre;font-family:'Liberation Mono',monospace;left:98.0px;letter-spacing:-0.5012px;">using</div>
<div style="top:142.75px;font-size:12.5px;line-height:12.5px;height:12.5px;color:#dcdcdc;white-space:pre;font-family:'Liberation Mono',monospace;left:133.0px;letter-spacing:-0.5012px;"> System;</div>
<div style="top:158.75px;font-size:12.5px;line-height:12.5px;height:12.5px;color:#4a7aa5;white-space:pre;font-family:'Liberation Mono',monospace;left:98.0px;letter-spacing:-0.5012px;">using</div>
<div style="top:158.75px;font-size:12.5px;line-height:12.5px;height:12.5px;color:#9b9b9b;white-space:pre;font-family:'Liberation Mono',monospace;left:133.0px;letter-spacing:-0.5012px;"> System.Collections.Generic;</div>
<div style="top:174.75px;font-size:12.5px;line-height:12.5px;height:12.5px;color:#4a7aa5;white-space:pre;font-family:'Liberation Mono',monospace;left:98.0px;letter-spacing:-0.5012px;">using</div>
<div style="top:174.75px;font-size:12.5px;line-height:12.5px;height:12.5px;color:#9b9b9b;white-space:pre;font-family:'Liberation Mono',monospace;left:133.0px;letter-spacing:-0.5012px;"> System.Linq;</div>
<div style="top:190.75px;font-size:12.5px;line-height:12.5px;height:12.5px;color:#4a7aa5;white-space:pre;font-family:'Liberation Mono',monospace;left:98.0px;letter-spacing:-0.5012px;">using</div>
<div style="top:190.75px;font-size:12.5px;line-height:12.5px;height:12.5px;color:#9b9b9b;white-space:pre;font-family:'Liberation Mono',monospace;left:133.0px;letter-spacing:-0.5012px;"> System.Threading.Tasks;</div>
<div style="top:206.75px;font-size:12.5px;line-height:12.5px;height:12.5px;color:#569cd6;white-space:pre;font-family:'Liberation Mono',monospace;left:98.0px;letter-spacing:-0.5012px;">using</div>
<div style="top:206.75px;font-size:12.5px;line-height:12.5px;height:12.5px;color:#dcdcdc;white-space:pre;font-family:'Liberation Mono',monospace;left:133.0px;letter-spacing:-0.5012px;"> System.Windows.Forms;</div>
<div style="top:238.75px;font-size:12.5px;line-height:12.5px;height:12.5px;color:#569cd6;white-space:pre;font-family:'Liberation Mono',monospace;left:98.0px;letter-spacing:-0.5012px;">namespace</div>
<div style="top:238.75px;font-size:12.5px;line-height:12.5px;height:12.5px;color:#dcdcdc;white-space:pre;font-family:'Liberation Mono',monospace;left:161.0px;letter-spacing:-0.5012px;"> Automobile_Repair_Shop</div>
<div style="top:254.75px;font-size:12.5px;line-height:12.5px;height:12.5px;color:#dcdcdc;white-space:pre;font-family:'Liberation Mono',monospace;left:98.0px;letter-spacing:-0.5012px;">{</div>
<div style="top:283.75px;font-size:12.5px;line-height:12.5px;height:12.5px;color:#569cd6;white-space:pre;font-family:'Liberation Mono',monospace;left:126.0px;letter-spacing:-0.5012px;">static</div>
<div style="top:283.75px;font-size:12.5px;line-height:12.5px;height:12.5px;color:#dcdcdc;white-space:pre;font-family:'Liberation Mono',monospace;left:168.0px;letter-spacing:-0.5012px;"> </div>
<div style="top:283.75px;font-size:12.5px;line-height:12.5px;height:12.5px;color:#569cd6;white-space:pre;font-family:'Liberation Mono',monospace;left:175.0px;letter-spacing:-0.5012px;">class</div>
<div style="top:283.75px;font-size:12.5px;line-height:12.5px;height:12.5px;color:#dcdcdc;white-space:pre;font-family:'Liberation Mono',monospace;left:210.0px;letter-spacing:-0.5012px;"> </div>
<div style="top:283.75px;font-size:12.5px;line-height:12.5px;height:12.5px;color:#4ec9b0;white-space:pre;font-family:'Liberation Mono',monospace;left:217.0px;letter-spacing:-0.5012px;">Program</div>
<div style="top:299.75px;font-size:12.5px;line-height:12.5px;height:12.5px;color:#dcdcdc;white-space:pre;font-family:'Liberation Mono',monospace;left:126.0px;letter-spacing:-0.5012px;">{</div>
<div style="top:315.75px;font-size:12.5px;line-height:12.5px;height:12.5px;color:#608b4e;white-space:pre;font-family:'Liberation Mono',monospace;left:154.0px;letter-spacing:-0.5012px;">/// &lt;summary&gt;</div>
<div style="top:331.75px;font-size:12.5px;line-height:12.5px;height:12.5px;color:#608b4e;white-space:pre;font-family:'Liberation Mono',monospace;left:154.0px;letter-spacing:-0.5012px;">/// </div>
<div style="top:331.75px;font-size:12.5px;line-height:12.5px;height:12.5px;color:#52a047;white-space:pre;font-family:'Liberation Mono',monospace;left:182.0px;letter-spacing:-0.5012px;">The main entry point for the application.</div>
<div style="top:347.75px;font-size:12.5px;line-height:12.5px;height:12.5px;color:#608b4e;white-space:pre;font-family:'Liberation Mono',monospace;left:154.0px;letter-spacing:-0.5012px;">/// &lt;/summary&gt;</div>
<div style="top:363.75px;font-size:12.5px;line-height:12.5px;height:12.5px;color:#dcdcdc;white-space:pre;font-family:'Liberation Mono',monospace;left:154.0px;letter-spacing:-0.5012px;">[</div>
<div style="top:363.75px;font-size:12.5px;line-height:12.5px;height:12.5px;color:#4ec9b0;white-space:pre;font-family:'Liberation Mono',monospace;left:161.0px;letter-spacing:-0.5012px;">STAThread</div>
<div style="top:363.75px;font-size:12.5px;line-height:12.5px;height:12.5px;color:#dcdcdc;white-space:pre;font-family:'Liberation Mono',monospace;left:224.0px;letter-spacing:-0.5012px;">]</div>
<div style="top:392.75px;font-size:12.5px;line-height:12.5px;height:12.5px;color:#569cd6;white-space:pre;font-family:'Liberation Mono',monospace;left:154.0px;letter-spacing:-0.5012px;">static</div>
<div style="top:392.75px;font-size:12.5px;line-height:12.5px;height:12.5px;color:#dcdcdc;white-space:pre;font-family:'Liberation Mono',monospace;left:196.0px;letter-spacing:-0.5012px;"> </div>
<div style="top:392.75px;font-size:12.5px;line-height:12.5px;height:12.5px;color:#569cd6;white-space:pre;font-family:'Liberation Mono',monospace;left:203.0px;letter-spacing:-0.5012px;">void</div>
<div style="top:392.75px;font-size:12.5px;line-height:12.5px;height:12.5px;color:#dcdcdc;white-space:pre;font-family:'Liberation Mono',monospace;left:231.0px;letter-spacing:-0.5012px;"> Main()</div>
<div style="top:408.75px;font-size:12.5px;line-height:12.5px;height:12.5px;color:#dcdcdc;white-space:pre;font-family:'Liberation Mono',monospace;left:154.0px;letter-spacing:-0.5012px;">{</div>
<div style="left:181px;top:422px;width:79px;height:17px;background:#0f4076;border:1px solid #3a6794;"></div>
<div style="left:181px;top:438px;width:79px;height:17px;background:#0f4076;border:1px solid #3a6794;"></div>
<div style="left:181px;top:454px;width:79px;height:17px;background:#0f4076;border:1px solid #3a6794;"></div>
<div style="left:96px;top:454px;width:1260px;height:16px;border:2px solid #464646;"></div>
<div style="top:424.75px;font-size:12.5px;line-height:12.5px;height:12.5px;color:#4ec9b0;white-space:pre;font-family:'Liberation Mono',monospace;left:182.0px;letter-spacing:-0.5012px;">Application</div>
<div style="top:424.75px;font-size:12.5px;line-height:12.5px;height:12.5px;color:#dcdcdc;white-space:pre;font-family:'Liberation Mono',monospace;left:259.0px;letter-spacing:-0.5012px;">.EnableVisualStyles();</div>
<div style="top:440.75px;font-size:12.5px;line-height:12.5px;height:12.5px;color:#4ec9b0;white-space:pre;font-family:'Liberation Mono',monospace;left:182.0px;letter-spacing:-0.5012px;">Application</div>
<div style="top:440.75px;font-size:12.5px;line-height:12.5px;height:12.5px;color:#dcdcdc;white-space:pre;font-family:'Liberation Mono',monospace;left:259.0px;letter-spacing:-0.5012px;">.SetCompatibleTextRenderingDefault(</div>
<div style="top:440.75px;font-size:12.5px;line-height:12.5px;height:12.5px;color:#569cd6;white-space:pre;font-family:'Liberation Mono',monospace;left:504.0px;letter-spacing:-0.5012px;">false</div>
<div style="top:440.75px;font-size:12.5px;line-height:12.5px;height:12.5px;color:#dcdcdc;white-space:pre;font-family:'Liberation Mono',monospace;left:539.0px;letter-spacing:-0.5012px;">);</div>
<div style="top:456.75px;font-size:12.5px;line-height:12.5px;height:12.5px;color:#4ec9b0;white-space:pre;font-family:'Liberation Mono',monospace;left:182.0px;letter-spacing:-0.5012px;">Application</div>
<div style="top:456.75px;font-size:12.5px;line-height:12.5px;height:12.5px;color:#dcdcdc;white-space:pre;font-family:'Liberation Mono',monospace;left:259.0px;letter-spacing:-0.5012px;">.Run(</div>
<div style="top:456.75px;font-size:12.5px;line-height:12.5px;height:12.5px;color:#569cd6;white-space:pre;font-family:'Liberation Mono',monospace;left:294.0px;letter-spacing:-0.5012px;">new</div>
<div style="top:456.75px;font-size:12.5px;line-height:12.5px;height:12.5px;color:#dcdcdc;white-space:pre;font-family:'Liberation Mono',monospace;left:315.0px;letter-spacing:-0.5012px;"> </div>
<div style="top:456.75px;font-size:12.5px;line-height:12.5px;height:12.5px;color:#4ec9b0;white-space:pre;font-family:'Liberation Mono',monospace;left:322.0px;letter-spacing:-0.5012px;">AutomobileRepairShop</div>
<div style="top:456.75px;font-size:12.5px;line-height:12.5px;height:12.5px;color:#dcdcdc;white-space:pre;font-family:'Liberation Mono',monospace;left:462.0px;letter-spacing:-0.5012px;">());</div>
<div style="top:472.75px;font-size:12.5px;line-height:12.5px;height:12.5px;color:#dcdcdc;white-space:pre;font-family:'Liberation Mono',monospace;left:154.0px;letter-spacing:-0.5012px;">}</div>
<div style="top:488.75px;font-size:12.5px;line-height:12.5px;height:12.5px;color:#dcdcdc;white-space:pre;font-family:'Liberation Mono',monospace;left:126.0px;letter-spacing:-0.5012px;">}</div>
<div style="top:504.75px;font-size:12.5px;line-height:12.5px;height:12.5px;color:#dcdcdc;white-space:pre;font-family:'Liberation Mono',monospace;left:98.0px;letter-spacing:-0.5012px;">}</div>
<div style="top:269.75px;font-size:9.5px;line-height:9.5px;height:9.5px;color:#999999;white-space:pre;letter-spacing:0.475px;left:126px;">0 references</div>
<div style="top:378.75px;font-size:9.5px;line-height:9.5px;height:9.5px;color:#999999;white-space:pre;letter-spacing:0.475px;left:154px;">0 references</div>
<div style="left:92px;top:151px;width:1px;height:68px;background:#a5a5a5;"></div>
<div style="left:92px;top:219px;width:4px;height:1px;background:#a5a5a5;"></div>
<div style="left:92px;top:247px;width:1px;height:270px;background:#a5a5a5;"></div>
<div style="left:92px;top:517px;width:4px;height:1px;background:#a5a5a5;"></div>
<div style="left:92px;top:360px;width:4px;height:1px;background:#a5a5a5;"></div>
<div style="left:92px;top:501px;width:4px;height:1px;background:#a5a5a5;"></div>
<div style="left:92px;top:485px;width:4px;height:1px;background:#a5a5a5;"></div>
<svg style="left:86.7px;top:143.5px;" width="9.5" height="9" viewBox="0 0 9.5 9"><rect x="0.5" y="0.5" width="8" height="8" fill="#1e1e1e" stroke="#a5a5a5" stroke-width="1"/><path d="M2 4.5 H7" stroke="#a5a5a5" stroke-width="1"/></svg>
<svg style="left:86.7px;top:239.5px;" width="9.5" height="9" viewBox="0 0 9.5 9"><rect x="0.5" y="0.5" width="8" height="8" fill="#1e1e1e" stroke="#a5a5a5" stroke-width="1"/><path d="M2 4.5 H7" stroke="#a5a5a5" stroke-width="1"/></svg>
<svg style="left:86.7px;top:284.5px;" width="9.5" height="9" viewBox="0 0 9.5 9"><rect x="0.5" y="0.5" width="8" height="8" fill="#1e1e1e" stroke="#a5a5a5" stroke-width="1"/><path d="M2 4.5 H7" stroke="#a5a5a5" stroke-width="1"/></svg>
<svg style="left:86.7px;top:316.5px;" width="9.5" height="9" viewBox="0 0 9.5 9"><rect x="0.5" y="0.5" width="8" height="8" fill="#1e1e1e" stroke="#a5a5a5" stroke-width="1"/><path d="M2 4.5 H7" stroke="#a5a5a5" stroke-width="1"/></svg>
<svg style="left:86.7px;top:393.5px;" width="9.5" height="9" viewBox="0 0 9.5 9"><rect x="0.5" y="0.5" width="8" height="8" fill="#1e1e1e" stroke="#a5a5a5" stroke-width="1"/><path d="M2 4.5 H7" stroke="#a5a5a5" stroke-width="1"/></svg>
<div style="left:101px;top:269px;width:1px;height:234px;background:repeating-linear-gradient(180deg,#6e6e6e 0,#6e6e6e 3px,transparent 3px,transparent 5px);"></div>
<div style="left:129px;top:314px;width:1px;height:173px;background:repeating-linear-gradient(180deg,#6e6e6e 0,#6e6e6e 3px,transparent 3px,transparent 5px);"></div>
<div style="left:157px;top:423px;width:1px;height:48px;background:repeating-linear-gradient(180deg,#6e6e6e 0,#6e6e6e 3px,transparent 3px,transparent 5px);"></div>
<div style="left:7px;top:1155px;width:1369px;height:18px;background:#3e3e42;"></div>
<div style="left:7px;top:1156px;width:60px;height:16px;background:#333337;border:1px solid #434346;"></div>
<div style="top:1158.00px;font-size:12px;line-height:12px;height:12px;color:#f1f1f1;white-space:pre;letter-spacing:-1.005px;left:10.5px;">100 %</div>
<svg style="left:58px;top:1163px;" width="6" height="4" viewBox="0 0 6 4"><path d="M0 0 H6 L3.0 3.5 Z" fill="#f1f1f1"/></svg>
<svg style="left:90.5px;top:1157.7px;" width="13" height="13" viewBox="0 0 13 13"><circle cx="6.5" cy="6.5" r="5.4" fill="#1f9a3c" stroke="#e8f5ea" stroke-width="1.2"/><path d="M3.8 6.6 L5.8 8.6 L9.3 4.6" stroke="#fff" stroke-width="1.4" fill="none"/></svg>
<div style="top:1158.00px;font-size:12px;line-height:12px;height:12px;color:#f1f1f1;white-space:pre;letter-spacing:-0.170px;left:107.5px;">No issues found</div>
<div style="left:249px;top:1157px;width:1px;height:13px;background:#c8c8c8;"></div>
<svg style="left:264.5px;top:1158px;" width="12" height="12" viewBox="0 0 12 12"><path d="M1 6 L6 1.5 L10 5 L7 9 Z" fill="#c8c8c8"/><path d="M3 7.5 L5.5 11" stroke="#c8c8c8" stroke-width="1.6"/><path d="M8 1 L11 4" stroke="#c8c8c8" stroke-width="1.2"/></svg>
<svg style="left:281px;top:1161.5px;" width="6" height="4" viewBox="0 0 6 4"><path d="M0 0 H6 L3.0 3.5 Z" fill="#f1f1f1"/></svg>
<svg style="left:317px;top:1159.5px;" width="5" height="8" viewBox="0 0 5 8"><path d="M5 0 L0 4 L5 8 Z" fill="#55555a"/></svg>
<svg style="left:1169px;top:1158px;" width="5" height="9" viewBox="0 0 5 9"><path d="M0 0 L5 4.5 L0 9 Z" fill="#55555a"/></svg>
<div style="top:1158.00px;font-size:12px;line-height:12px;height:12px;color:#f1f1f1;white-space:pre;letter-spacing:-0.560px;left:1202px;">Ln: 19</div>
<div style="top:1158.00px;font-size:12px;line-height:12px;height:12px;color:#f1f1f1;white-space:pre;letter-spacing:-0.642px;left:1250.5px;">Ch: 13</div>
<div style="top:1158.00px;font-size:12px;line-height:12px;height:12px;color:#f1f1f1;white-space:pre;letter-spacing:-1.725px;left:1301px;">SPC</div>
<div style="top:1158.00px;font-size:12px;line-height:12px;height:12px;color:#f1f1f1;white-space:pre;letter-spacing:-1.584px;left:1340px;">CRLF</div>
<div style="left:362px;top:296px;width:934px;height:684px;border-radius:4px 4px 0 0;box-shadow:0 4px 16px rgba(0,0,0,0.45);"></div>
<div style="left:362px;top:316px;width:934px;height:661px;background:#eceff4;border-left:1px solid #f8f9fb;border-right:1px solid #f8f9fb;border-bottom:1px solid #f8f9fb;"></div>
<div style="left:362px;top:977px;width:934px;height:3px;background:#2e3440;"></div>
<div style="left:362px;top:296px;width:934px;height:33px;background:#2e3440;border-radius:4px 4px 0 0;"></div>
<svg style="left:370.8px;top:305.8px;" width="14.4" height="14.4" viewBox="0 0 14.4 14.4"><rect x="0" y="0" width="14.4" height="14.4" fill="#e6e2d6"/><rect x="0.3" y="0.3" width="13.8" height="13.8" fill="none" stroke="#c9c5b8" stroke-width="0.6"/><rect x="1.1" y="1.1" width="4.1" height="2.9" fill="#1f2a44"/><rect x="1.1" y="5.2" width="4.1" height="4.6" fill="#c31a10"/><rect x="2" y="6" width="1.4" height="2.2" fill="#f08070"/><rect x="6.3" y="1.2" width="6.7" height="6.3" fill="#ffd24a" stroke="#c98a00" stroke-width="0.8"/><rect x="7.3" y="2" width="3.6" height="3" fill="#ffeaa0"/><rect x="6.3" y="9.2" width="5" height="3.8" fill="#4f8fe8"/><rect x="7" y="9.8" width="2.6" height="1.6" fill="#9cc4f8"/><rect x="12.1" y="9.2" width="0.9" height="3.8" fill="#2a2a2a"/><rect x="1.3" y="11.3" width="1.8" height="1.8" fill="#1f2a44"/><rect x="4" y="11.3" width="1.2" height="1.8" fill="#1f2a44"/></svg>
<div style="top:307.75px;font-size:12.5px;line-height:12.5px;height:12.5px;color:#ffffff;white-space:pre;letter-spacing:-0.318px;left:391px;">Automobile Repair Shop</div>
<div style="left:1190px;top:308px;width:10px;height:10px;background:#ebcb8b;border-radius:50%;"></div>
<div style="left:1229px;top:308px;width:10px;height:10px;background:#a3be8c;border-radius:50%;"></div>
<div style="left:1270px;top:308px;width:10px;height:10px;background:#bf616a;border-radius:50%;"></div>
<div style="left:362px;top:329px;width:934px;height:24px;background:linear-gradient(90deg,#eef0f5 0%,#f3f5f8 40%,#fafbfc 100%);"></div>
<div style="top:334.75px;font-size:12.5px;line-height:12.5px;height:12.5px;color:#2b303b;white-space:pre;letter-spacing:-0.191px;left:377.5px;">Menu</div>
<div style="top:334.75px;font-size:12.5px;line-height:12.5px;height:12.5px;color:#2b303b;white-space:pre;letter-spacing:-0.606px;left:427.5px;">Data Entries</div>
<div style="top:334.75px;font-size:12.5px;line-height:12.5px;height:12.5px;color:#2b303b;white-space:pre;letter-spacing:-0.407px;left:508.5px;">DB Management</div>
<div style="left:384px;top:378px;width:257px;height:150px;background:#ababab;border:1px solid #3b4252;"></div>
<div style="left:385px;top:379px;width:255px;height:1px;background:#3b4252;"></div>
<div style="left:385px;top:379px;width:1px;height:128px;background:#3b4252;"></div>
<div style="left:386px;top:380px;width:253px;height:16px;background:#eceff4;"></div>
<div style="left:386px;top:396px;width:39px;height:110px;background:#eceff4;"></div>
<div style="left:425px;top:396px;width:214px;height:110px;background:#ffffff;"></div>
<div style="left:426px;top:397px;width:70px;height:21px;background:#4c566a;"></div>
<div style="left:496px;top:381px;width:1px;height:15px;background:#dfe3ea;"></div>
<div style="left:568px;top:381px;width:1px;height:15px;background:#dfe3ea;"></div>
<div style="left:425px;top:380px;width:1px;height:16px;background:#7b8494;"></div>
<div style="left:386px;top:396px;width:254px;height:1px;background:#3b4252;"></div>
<div style="left:425px;top:418px;width:215px;height:1px;background:#4c566a;"></div>
<div style="left:386px;top:418px;width:39px;height:1px;background:#e2e6ec;"></div>
<div style="left:425px;top:440px;width:215px;height:1px;background:#4c566a;"></div>
<div style="left:386px;top:440px;width:39px;height:1px;background:#e2e6ec;"></div>
<div style="left:425px;top:462px;width:215px;height:1px;background:#4c566a;"></div>
<div style="left:386px;top:462px;width:39px;height:1px;background:#e2e6ec;"></div>
<div style="left:425px;top:484px;width:215px;height:1px;background:#4c566a;"></div>
<div style="left:386px;top:484px;width:39px;height:1px;background:#e2e6ec;"></div>
<div style="left:425px;top:506px;width:215px;height:1px;background:#4c566a;"></div>
<div style="left:386px;top:506px;width:39px;height:1px;background:#eceff4;"></div>
<div style="left:425px;top:396px;width:1px;height:111px;background:#4c566a;"></div>
<div style="left:496px;top:396px;width:1px;height:111px;background:#4c566a;"></div>
<div style="left:568px;top:396px;width:1px;height:111px;background:#4c566a;"></div>
<div style="left:639px;top:396px;width:1px;height:111px;background:#4c566a;"></div>
<div style="left:639px;top:379px;width:1px;height:18px;background:#3b4252;"></div>
<div style="top:383.50px;font-size:11px;line-height:11px;height:11px;color:#1d2128;white-space:pre;letter-spacing:-0.140px;left:430.5px;">ClientId</div>
<div style="top:383.50px;font-size:11px;line-height:11px;height:11px;color:#1d2128;white-space:pre;letter-spacing:-0.175px;left:501.5px;">ClientFName</div>
<div style="top:383.50px;font-size:11px;line-height:11px;height:11px;color:#1d2128;white-space:pre;letter-spacing:-0.173px;left:573.5px;">ClientLName</div>
<div style="top:402.50px;font-size:11px;line-height:11px;height:11px;color:#ffffff;white-space:pre;left:429px;">1</div>
<div style="top:402.50px;font-size:11px;line-height:11px;height:11px;color:#2b303b;white-space:pre;letter-spacing:-0.436px;left:500px;">Max</div>
<div style="top:402.50px;font-size:11px;line-height:11px;height:11px;color:#2b303b;white-space:pre;letter-spacing:-0.341px;left:572px;">Peirano</div>
<div style="top:424.50px;font-size:11px;line-height:11px;height:11px;color:#2b303b;white-space:pre;left:429px;">2</div>
<div style="top:424.50px;font-size:11px;line-height:11px;height:11px;color:#2b303b;white-space:pre;letter-spacing:-0.370px;left:500px;">Bruno</div>
<div style="top:424.50px;font-size:11px;line-height:11px;height:11px;color:#2b303b;white-space:pre;letter-spacing:-0.330px;left:572px;">Rissoto</div>
<div style="top:446.50px;font-size:11px;line-height:11px;height:11px;color:#2b303b;white-space:pre;left:429px;">3</div>
<div style="top:446.50px;font-size:11px;line-height:11px;height:11px;color:#2b303b;white-space:pre;letter-spacing:-0.352px;left:500px;">Barbara</div>
<div style="top:446.50px;font-size:11px;line-height:11px;height:11px;color:#2b303b;white-space:pre;letter-spacing:-0.325px;left:572px;">Tethers</div>
<div style="top:468.50px;font-size:11px;line-height:11px;height:11px;color:#2b303b;white-space:pre;left:429px;">4</div>
<div style="top:468.50px;font-size:11px;line-height:11px;height:11px;color:#2b303b;white-space:pre;letter-spacing:-0.372px;left:500px;">Nathan</div>
<div style="top:468.50px;font-size:11px;line-height:11px;height:11px;color:#2b303b;white-space:pre;letter-spacing:-0.366px;left:572px;">Campbell</div>
<div style="top:490.50px;font-size:11px;line-height:11px;height:11px;color:#2b303b;white-space:pre;left:429px;">5</div>
<div style="top:490.50px;font-size:11px;line-height:11px;height:11px;color:#2b303b;white-space:pre;letter-spacing:-0.358px;left:500px;">Dominic</div>
<div style="top:490.50px;font-size:11px;line-height:11px;height:11px;color:#2b303b;white-space:pre;letter-spacing:-0.416px;left:572px;">Quang</div>
<svg style="left:391px;top:403px;" width="5" height="9" viewBox="0 0 5 9"><path d="M0 0 L5 4.5 L0 9 Z" fill="#2e3440"/></svg>
<div style="left:663px;top:378px;width:609px;height:150px;background:#ababab;border:1px solid #3b4252;"></div>
<div style="left:664px;top:379px;width:590px;height:1px;background:#3b4252;"></div>
<div style="left:664px;top:379px;width:1px;height:148px;background:#3b4252;"></div>
<div style="left:665px;top:380px;width:588px;height:16px;background:#eceff4;"></div>
<div style="left:665px;top:396px;width:39px;height:131px;background:#eceff4;"></div>
<div style="left:704px;top:396px;width:549px;height:131px;background:#ffffff;"></div>
<div style="left:705px;top:397px;width:108px;height:21px;background:#4c566a;"></div>
<div style="left:813px;top:381px;width:1px;height:15px;background:#dfe3ea;"></div>
<div style="left:923px;top:381px;width:1px;height:15px;background:#dfe3ea;"></div>
<div style="left:1032px;top:381px;width:1px;height:15px;background:#dfe3ea;"></div>
<div style="left:1142px;top:381px;width:1px;height:15px;background:#dfe3ea;"></div>
<div style="left:704px;top:380px;width:1px;height:16px;background:#7b8494;"></div>
<div style="left:665px;top:396px;width:589px;height:1px;background:#3b4252;"></div>
<div style="left:704px;top:418px;width:550px;height:1px;background:#4c566a;"></div>
<div style="left:665px;top:418px;width:39px;height:1px;background:#e2e6ec;"></div>
<div style="left:704px;top:440px;width:550px;height:1px;background:#4c566a;"></div>
<div style="left:665px;top:440px;width:39px;height:1px;background:#e2e6ec;"></div>
<div style="left:704px;top:462px;width:550px;height:1px;background:#4c566a;"></div>
<div style="left:665px;top:462px;width:39px;height:1px;background:#e2e6ec;"></div>
<div style="left:704px;top:484px;width:550px;height:1px;background:#4c566a;"></div>
<div style="left:665px;top:484px;width:39px;height:1px;background:#e2e6ec;"></div>
<div style="left:704px;top:506px;width:550px;height:1px;background:#4c566a;"></div>
<div style="left:665px;top:506px;width:39px;height:1px;background:#e2e6ec;"></div>
<div style="left:704px;top:396px;width:1px;height:131px;background:#4c566a;"></div>
<div style="left:813px;top:396px;width:1px;height:131px;background:#4c566a;"></div>
<div style="left:923px;top:396px;width:1px;height:131px;background:#4c566a;"></div>
<div style="left:1032px;top:396px;width:1px;height:131px;background:#4c566a;"></div>
<div style="left:1142px;top:396px;width:1px;height:131px;background:#4c566a;"></div>
<div style="left:1253px;top:396px;width:1px;height:131px;background:#4c566a;"></div>
<div style="top:383.50px;font-size:11px;line-height:11px;height:11px;color:#1d2128;white-space:pre;letter-spacing:-0.149px;left:709.5px;">VehicleId</div>
<div style="top:383.50px;font-size:11px;line-height:11px;height:11px;color:#1d2128;white-space:pre;letter-spacing:-0.166px;left:818.5px;">VehiclePlateNumber</div>
<div style="top:383.50px;font-size:11px;line-height:11px;height:11px;color:#1d2128;white-space:pre;letter-spacing:-0.154px;left:928.5px;">VehicleStatus</div>
<div style="top:383.50px;font-size:11px;line-height:11px;height:11px;color:#1d2128;white-space:pre;letter-spacing:-0.164px;left:1037.5px;">VehicleModel</div>
<div style="top:383.50px;font-size:11px;line-height:11px;height:11px;color:#1d2128;white-space:pre;letter-spacing:-0.170px;left:1147.5px;">VehicleMake</div>
<div style="top:402.50px;font-size:11px;line-height:11px;height:11px;color:#ffffff;white-space:pre;left:708px;">1</div>
<div style="top:402.50px;font-size:11px;line-height:11px;height:11px;color:#2b303b;white-space:pre;letter-spacing:-0.396px;left:817px;">R31176</div>
<div style="top:402.50px;font-size:11px;line-height:11px;height:11px;color:#2b303b;white-space:pre;letter-spacing:-0.327px;left:927px;">Finished</div>
<div style="top:402.50px;font-size:11px;line-height:11px;height:11px;color:#2b303b;white-space:pre;letter-spacing:-0.333px;left:1036px;">Aeroster V6</div>
<div style="top:402.50px;font-size:11px;line-height:11px;height:11px;color:#2b303b;white-space:pre;letter-spacing:-0.356px;left:1146px;">Ford</div>
<div style="top:424.50px;font-size:11px;line-height:11px;height:11px;color:#2b303b;white-space:pre;left:708px;">2</div>
<div style="top:424.50px;font-size:11px;line-height:11px;height:11px;color:#2b303b;white-space:pre;letter-spacing:-0.483px;left:817px;">WAUFC0</div>
<div style="top:424.50px;font-size:11px;line-height:11px;height:11px;color:#2b303b;white-space:pre;letter-spacing:-0.327px;left:927px;">Finished</div>
<div style="top:424.50px;font-size:11px;line-height:11px;height:11px;color:#2b303b;white-space:pre;letter-spacing:-0.327px;left:1036px;">Corvette</div>
<div style="top:424.50px;font-size:11px;line-height:11px;height:11px;color:#2b303b;white-space:pre;letter-spacing:-0.330px;left:1146px;">Chevrolet</div>
<div style="top:446.50px;font-size:11px;line-height:11px;height:11px;color:#2b303b;white-space:pre;left:708px;">3</div>
<div style="top:446.50px;font-size:11px;line-height:11px;height:11px;color:#2b303b;white-space:pre;letter-spacing:-0.424px;left:817px;">YV1LS5</div>
<div style="top:446.50px;font-size:11px;line-height:11px;height:11px;color:#2b303b;white-space:pre;letter-spacing:-0.319px;left:927px;">Started</div>
<div style="top:446.50px;font-size:11px;line-height:11px;height:11px;color:#2b303b;white-space:pre;letter-spacing:-0.300px;left:1036px;">Civic</div>
<div style="top:446.50px;font-size:11px;line-height:11px;height:11px;color:#2b303b;white-space:pre;letter-spacing:-0.408px;left:1146px;">Honda</div>
<div style="top:468.50px;font-size:11px;line-height:11px;height:11px;color:#2b303b;white-space:pre;left:708px;">4</div>
<div style="top:468.50px;font-size:11px;line-height:11px;height:11px;color:#2b303b;white-space:pre;letter-spacing:-0.407px;left:817px;">5HD111</div>
<div style="top:468.50px;font-size:11px;line-height:11px;height:11px;color:#2b303b;white-space:pre;letter-spacing:-0.327px;left:927px;">Finished</div>
<div style="top:468.50px;font-size:11px;line-height:11px;height:11px;color:#2b303b;white-space:pre;letter-spacing:-0.347px;left:1036px;">Scion</div>
<div style="top:468.50px;font-size:11px;line-height:11px;height:11px;color:#2b303b;white-space:pre;letter-spacing:-0.340px;left:1146px;">Toyota</div>
<div style="top:490.50px;font-size:11px;line-height:11px;height:11px;color:#2b303b;white-space:pre;left:708px;">5</div>
<div style="top:490.50px;font-size:11px;line-height:11px;height:11px;color:#2b303b;white-space:pre;letter-spacing:-0.424px;left:817px;">3FEKF3</div>
<div style="top:490.50px;font-size:11px;line-height:11px;height:11px;color:#2b303b;white-space:pre;letter-spacing:-0.319px;left:927px;">Started</div>
<div style="top:490.50px;font-size:11px;line-height:11px;height:11px;color:#2b303b;white-space:pre;letter-spacing:-0.321px;left:1036px;">Viper</div>
<div style="top:490.50px;font-size:11px;line-height:11px;height:11px;color:#2b303b;white-space:pre;letter-spacing:-0.408px;left:1146px;">Dodge</div>
<svg style="left:670px;top:403px;" width="5" height="9" viewBox="0 0 5 9"><path d="M0 0 L5 4.5 L0 9 Z" fill="#2e3440"/></svg>
<svg style="left:672.5px;top:513px;" width="6" height="6" viewBox="0 0 6 6"><path d="M3 0 V6 M0 3 H6 M0.9 0.9 L5.1 5.1 M5.1 0.9 L0.9 5.1" stroke="#3b4252" stroke-width="1.3"/><circle cx="3" cy="3" r="1.6" fill="#3b4252"/></svg>
<div style="left:1254px;top:379px;width:17px;height:148px;background:#eceff4;"></div>
<div style="left:1253px;top:380px;width:1px;height:16px;background:#c9ced8;"></div>
<svg style="left:1258px;top:385px;" width="9" height="6" viewBox="0 0 9 6"><path d="M1 5.2 L4.5 1.6 L8 5.2" fill="none" stroke="#7fb0ad" stroke-width="1.9"/></svg>
<svg style="left:1258px;top:515px;" width="9" height="6" viewBox="0 0 9 6"><path d="M1 0.8 L4.5 4.4 L8 0.8" fill="none" stroke="#7fb0ad" stroke-width="1.9"/></svg>
<div style="left:1259px;top:396px;width:7px;height:111px;background:#8cb3b1;border-radius:3.5px;"></div>
<div style="left:384px;top:548px;width:257px;height:157px;background:#ababab;border:1px solid #3b4252;"></div>
<div style="left:385px;top:549px;width:255px;height:1px;background:#3b4252;"></div>
<div style="left:385px;top:549px;width:1px;height:128px;background:#3b4252;"></div>
<div style="left:386px;top:550px;width:253px;height:16px;background:#eceff4;"></div>
<div style="left:386px;top:566px;width:39px;height:110px;background:#eceff4;"></div>
<div style="left:425px;top:566px;width:214px;height:110px;background:#ffffff;"></div>
<div style="left:426px;top:567px;width:70px;height:21px;background:#4c566a;"></div>
<div style="left:496px;top:551px;width:1px;height:15px;background:#dfe3ea;"></div>
<div style="left:568px;top:551px;width:1px;height:15px;background:#dfe3ea;"></div>
<div style="left:425px;top:550px;width:1px;height:16px;background:#7b8494;"></div>
<div style="left:386px;top:566px;width:254px;height:1px;background:#3b4252;"></div>
<div style="left:425px;top:588px;width:215px;height:1px;background:#4c566a;"></div>
<div style="left:386px;top:588px;width:39px;height:1px;background:#e2e6ec;"></div>
<div style="left:425px;top:610px;width:215px;height:1px;background:#4c566a;"></div>
<div style="left:386px;top:610px;width:39px;height:1px;background:#e2e6ec;"></div>
<div style="left:425px;top:632px;width:215px;height:1px;background:#4c566a;"></div>
<div style="left:386px;top:632px;width:39px;height:1px;background:#e2e6ec;"></div>
<div style="left:425px;top:654px;width:215px;height:1px;background:#4c566a;"></div>
<div style="left:386px;top:654px;width:39px;height:1px;background:#e2e6ec;"></div>
<div style="left:425px;top:676px;width:215px;height:1px;background:#4c566a;"></div>
<div style="left:386px;top:676px;width:39px;height:1px;background:#eceff4;"></div>
<div style="left:425px;top:566px;width:1px;height:111px;background:#4c566a;"></div>
<div style="left:496px;top:566px;width:1px;height:111px;background:#4c566a;"></div>
<div style="left:568px;top:566px;width:1px;height:111px;background:#4c566a;"></div>
<div style="left:639px;top:566px;width:1px;height:111px;background:#4c566a;"></div>
<div style="left:639px;top:549px;width:1px;height:18px;background:#3b4252;"></div>
<div style="top:553.50px;font-size:11px;line-height:11px;height:11px;color:#1d2128;white-space:pre;letter-spacing:-0.174px;left:430.5px;">EmployeeId</div>
<div style="top:553.50px;font-size:11px;line-height:11px;height:11px;color:#1d2128;white-space:pre;letter-spacing:-0.190px;left:501.5px;">EmployeeFNa</div>
<div style="top:553.50px;font-size:11px;line-height:11px;height:11px;color:#1d2128;white-space:pre;letter-spacing:-0.188px;left:573.5px;">EmployeeLNa</div>
<div style="top:572.50px;font-size:11px;line-height:11px;height:11px;color:#ffffff;white-space:pre;left:429px;">1</div>
<div style="top:572.50px;font-size:11px;line-height:11px;height:11px;color:#2b303b;white-space:pre;letter-spacing:-0.354px;left:500px;">Elana</div>
<div style="top:572.50px;font-size:11px;line-height:11px;height:11px;color:#2b303b;white-space:pre;letter-spacing:-0.385px;left:572px;">Lobb</div>
<div style="top:594.50px;font-size:11px;line-height:11px;height:11px;color:#2b303b;white-space:pre;left:429px;">2</div>
<div style="top:594.50px;font-size:11px;line-height:11px;height:11px;color:#2b303b;white-space:pre;letter-spacing:-0.334px;left:500px;">Tobias</div>
<div style="top:594.50px;font-size:11px;line-height:11px;height:11px;color:#2b303b;white-space:pre;letter-spacing:-0.414px;left:572px;">Rand</div>
<div style="top:616.50px;font-size:11px;line-height:11px;height:11px;color:#2b303b;white-space:pre;left:429px;">3</div>
<div style="top:616.50px;font-size:11px;line-height:11px;height:11px;color:#2b303b;white-space:pre;letter-spacing:-0.351px;left:500px;">Valene</div>
<div style="top:616.50px;font-size:11px;line-height:11px;height:11px;color:#2b303b;white-space:pre;letter-spacing:-0.282px;left:572px;">Israel</div>
<div style="top:638.50px;font-size:11px;line-height:11px;height:11px;color:#2b303b;white-space:pre;left:429px;">4</div>
<div style="top:638.50px;font-size:11px;line-height:11px;height:11px;color:#2b303b;white-space:pre;letter-spacing:-0.334px;left:500px;">Siu</div>
<div style="top:638.50px;font-size:11px;line-height:11px;height:11px;color:#2b303b;white-space:pre;letter-spacing:-0.404px;left:572px;">Haye</div>
<div style="top:660.50px;font-size:11px;line-height:11px;height:11px;color:#2b303b;white-space:pre;left:429px;">5</div>
<div style="top:660.50px;font-size:11px;line-height:11px;height:11px;color:#2b303b;white-space:pre;letter-spacing:-0.277px;left:500px;">Lorri</div>
<div style="top:660.50px;font-size:11px;line-height:11px;height:11px;color:#2b303b;white-space:pre;letter-spacing:-0.318px;left:572px;">Toal</div>
<svg style="left:391px;top:573px;" width="5" height="9" viewBox="0 0 5 9"><path d="M0 0 L5 4.5 L0 9 Z" fill="#2e3440"/></svg>
<div style="left:663px;top:548px;width:279px;height:157px;background:#ababab;border:1px solid #3b4252;"></div>
<div style="left:664px;top:549px;width:260px;height:1px;background:#3b4252;"></div>
<div style="left:664px;top:549px;width:1px;height:155px;background:#3b4252;"></div>
<div style="left:665px;top:550px;width:258px;height:16px;background:#eceff4;"></div>
<div style="left:665px;top:566px;width:39px;height:138px;background:#eceff4;"></div>
<div style="left:704px;top:566px;width:219px;height:138px;background:#ffffff;"></div>
<div style="left:705px;top:567px;width:108px;height:21px;background:#4c566a;"></div>
<div style="left:813px;top:551px;width:1px;height:15px;background:#dfe3ea;"></div>
<div style="left:704px;top:550px;width:1px;height:16px;background:#7b8494;"></div>
<div style="left:665px;top:566px;width:259px;height:1px;background:#3b4252;"></div>
<div style="left:704px;top:588px;width:220px;height:1px;background:#4c566a;"></div>
<div style="left:665px;top:588px;width:39px;height:1px;background:#e2e6ec;"></div>
<div style="left:704px;top:610px;width:220px;height:1px;background:#4c566a;"></div>
<div style="left:665px;top:610px;width:39px;height:1px;background:#e2e6ec;"></div>
<div style="left:704px;top:632px;width:220px;height:1px;background:#4c566a;"></div>
<div style="left:665px;top:632px;width:39px;height:1px;background:#e2e6ec;"></div>
<div style="left:704px;top:654px;width:220px;height:1px;background:#4c566a;"></div>
<div style="left:665px;top:654px;width:39px;height:1px;background:#e2e6ec;"></div>
<div style="left:704px;top:676px;width:220px;height:1px;background:#4c566a;"></div>
<div style="left:665px;top:676px;width:39px;height:1px;background:#e2e6ec;"></div>
<div style="left:704px;top:698px;width:220px;height:1px;background:#4c566a;"></div>
<div style="left:665px;top:698px;width:39px;height:1px;background:#e2e6ec;"></div>
<div style="left:704px;top:566px;width:1px;height:138px;background:#4c566a;"></div>
<div style="left:813px;top:566px;width:1px;height:138px;background:#4c566a;"></div>
<div style="left:923px;top:566px;width:1px;height:138px;background:#4c566a;"></div>
<div style="top:553.50px;font-size:11px;line-height:11px;height:11px;color:#1d2128;white-space:pre;letter-spacing:-0.147px;left:709.5px;">PartId</div>
<div style="top:553.50px;font-size:11px;line-height:11px;height:11px;color:#1d2128;white-space:pre;letter-spacing:-0.186px;left:818.5px;">PartName</div>
<div style="top:572.50px;font-size:11px;line-height:11px;height:11px;color:#ffffff;white-space:pre;left:708px;">1</div>
<div style="top:572.50px;font-size:11px;line-height:11px;height:11px;color:#2b303b;white-space:pre;letter-spacing:-0.362px;left:817px;">Radio</div>
<div style="top:594.50px;font-size:11px;line-height:11px;height:11px;color:#2b303b;white-space:pre;left:708px;">2</div>
<div style="top:594.50px;font-size:11px;line-height:11px;height:11px;color:#2b303b;white-space:pre;letter-spacing:-0.292px;left:817px;">Tire</div>
<div style="top:616.50px;font-size:11px;line-height:11px;height:11px;color:#2b303b;white-space:pre;left:708px;">3</div>
<div style="top:616.50px;font-size:11px;line-height:11px;height:11px;color:#2b303b;white-space:pre;letter-spacing:-0.362px;left:817px;">Break</div>
<div style="top:638.50px;font-size:11px;line-height:11px;height:11px;color:#2b303b;white-space:pre;left:708px;">4</div>
<div style="top:638.50px;font-size:11px;line-height:11px;height:11px;color:#2b303b;white-space:pre;letter-spacing:-0.327px;left:817px;">Headlights</div>
<div style="top:660.50px;font-size:11px;line-height:11px;height:11px;color:#2b303b;white-space:pre;left:708px;">5</div>
<div style="top:660.50px;font-size:11px;line-height:11px;height:11px;color:#2b303b;white-space:pre;letter-spacing:-0.305px;left:817px;">Alternators</div>
<div style="top:682.50px;font-size:11px;line-height:11px;height:11px;color:#2b303b;white-space:pre;left:708px;">6</div>
<div style="top:682.50px;font-size:11px;line-height:11px;height:11px;color:#2b303b;white-space:pre;letter-spacing:-0.344px;left:817px;">Rotor and Pad</div>
<svg style="left:670px;top:573px;" width="5" height="9" viewBox="0 0 5 9"><path d="M0 0 L5 4.5 L0 9 Z" fill="#2e3440"/></svg>
<div style="left:924px;top:549px;width:17px;height:155px;background:#eceff4;"></div>
<div style="left:923px;top:550px;width:1px;height:16px;background:#c9ced8;"></div>
<svg style="left:928px;top:555px;" width="9" height="6" viewBox="0 0 9 6"><path d="M1 5.2 L4.5 1.6 L8 5.2" fill="none" stroke="#7fb0ad" stroke-width="1.9"/></svg>
<svg style="left:928px;top:692px;" width="9" height="6" viewBox="0 0 9 6"><path d="M1 0.8 L4.5 4.4 L8 0.8" fill="none" stroke="#7fb0ad" stroke-width="1.9"/></svg>
<div style="left:929px;top:566px;width:7px;height:62px;background:#8cb3b1;border-radius:3.5px;"></div>
<div style="left:383px;top:724px;width:889px;height:201px;background:#ababab;border:1px solid #3b4252;"></div>
<div style="left:384px;top:725px;width:887px;height:1px;background:#3b4252;"></div>
<div style="left:384px;top:725px;width:1px;height:150px;background:#3b4252;"></div>
<div style="left:385px;top:726px;width:885px;height:16px;background:#eceff4;"></div>
<div style="left:385px;top:742px;width:39px;height:132px;background:#eceff4;"></div>
<div style="left:424px;top:742px;width:846px;height:132px;background:#ffffff;"></div>
<div style="left:425px;top:743px;width:93px;height:21px;background:#4c566a;"></div>
<div style="left:518px;top:727px;width:1px;height:15px;background:#dfe3ea;"></div>
<div style="left:612px;top:727px;width:1px;height:15px;background:#dfe3ea;"></div>
<div style="left:706px;top:727px;width:1px;height:15px;background:#dfe3ea;"></div>
<div style="left:800px;top:727px;width:1px;height:15px;background:#dfe3ea;"></div>
<div style="left:894px;top:727px;width:1px;height:15px;background:#dfe3ea;"></div>
<div style="left:988px;top:727px;width:1px;height:15px;background:#dfe3ea;"></div>
<div style="left:1082px;top:727px;width:1px;height:15px;background:#dfe3ea;"></div>
<div style="left:1176px;top:727px;width:1px;height:15px;background:#dfe3ea;"></div>
<div style="left:424px;top:726px;width:1px;height:16px;background:#7b8494;"></div>
<div style="left:385px;top:742px;width:886px;height:1px;background:#3b4252;"></div>
<div style="left:424px;top:764px;width:847px;height:1px;background:#4c566a;"></div>
<div style="left:385px;top:764px;width:39px;height:1px;background:#e2e6ec;"></div>
<div style="left:424px;top:786px;width:847px;height:1px;background:#4c566a;"></div>
<div style="left:385px;top:786px;width:39px;height:1px;background:#e2e6ec;"></div>
<div style="left:424px;top:808px;width:847px;height:1px;background:#4c566a;"></div>
<div style="left:385px;top:808px;width:39px;height:1px;background:#e2e6ec;"></div>
<div style="left:424px;top:830px;width:847px;height:1px;background:#4c566a;"></div>
<div style="left:385px;top:830px;width:39px;height:1px;background:#e2e6ec;"></div>
<div style="left:424px;top:852px;width:847px;height:1px;background:#4c566a;"></div>
<div style="left:385px;top:852px;width:39px;height:1px;background:#e2e6ec;"></div>
<div style="left:424px;top:874px;width:847px;height:1px;background:#4c566a;"></div>
<div style="left:385px;top:874px;width:39px;height:1px;background:#eceff4;"></div>
<div style="left:424px;top:742px;width:1px;height:133px;background:#4c566a;"></div>
<div style="left:518px;top:742px;width:1px;height:133px;background:#4c566a;"></div>
<div style="left:612px;top:742px;width:1px;height:133px;background:#4c566a;"></div>
<div style="left:706px;top:742px;width:1px;height:133px;background:#4c566a;"></div>
<div style="left:800px;top:742px;width:1px;height:133px;background:#4c566a;"></div>
<div style="left:894px;top:742px;width:1px;height:133px;background:#4c566a;"></div>
<div style="left:988px;top:742px;width:1px;height:133px;background:#4c566a;"></div>
<div style="left:1082px;top:742px;width:1px;height:133px;background:#4c566a;"></div>
<div style="left:1176px;top:742px;width:1px;height:133px;background:#4c566a;"></div>
<div style="left:1270px;top:742px;width:1px;height:133px;background:#4c566a;"></div>
<div style="left:1270px;top:725px;width:1px;height:18px;background:#3b4252;"></div>
<div style="top:729.50px;font-size:11px;line-height:11px;height:11px;color:#1d2128;white-space:pre;letter-spacing:-0.127px;left:429.5px;">ServiceId</div>
<div style="top:729.50px;font-size:11px;line-height:11px;height:11px;color:#1d2128;white-space:pre;letter-spacing:-0.117px;left:523.5px;">ClientId</div>
<div style="top:729.50px;font-size:11px;line-height:11px;height:11px;color:#1d2128;white-space:pre;letter-spacing:-0.124px;left:617.5px;">VehicleId</div>
<div style="top:729.50px;font-size:11px;line-height:11px;height:11px;color:#1d2128;white-space:pre;letter-spacing:-0.145px;left:711.5px;">EmployeeId</div>
<div style="top:729.50px;font-size:11px;line-height:11px;height:11px;color:#1d2128;white-space:pre;letter-spacing:-0.122px;left:805.5px;">PartId</div>
<div style="top:729.50px;font-size:11px;line-height:11px;height:11px;color:#1d2128;white-space:pre;letter-spacing:-0.130px;left:899.5px;">ServiceStartDate</div>
<div style="top:729.50px;font-size:11px;line-height:11px;height:11px;color:#1d2128;white-space:pre;letter-spacing:-0.142px;left:993.5px;">ServiceEndDate</div>
<div style="top:729.50px;font-size:11px;line-height:11px;height:11px;color:#1d2128;white-space:pre;letter-spacing:-0.135px;left:1087.5px;">ServiceCost</div>
<div style="top:729.50px;font-size:11px;line-height:11px;height:11px;color:#1d2128;white-space:pre;letter-spacing:-0.130px;left:1181.5px;">ServiceLocation</div>
<div style="top:748.50px;font-size:11px;line-height:11px;height:11px;color:#ffffff;white-space:pre;left:428.3px;">1</div>
<div style="top:748.50px;font-size:11px;line-height:11px;height:11px;color:#2b303b;white-space:pre;left:522.3px;">1</div>
<div style="top:748.50px;font-size:11px;line-height:11px;height:11px;color:#2b303b;white-space:pre;left:616.3px;">1</div>
<div style="top:748.50px;font-size:11px;line-height:11px;height:11px;color:#2b303b;white-space:pre;left:710.3px;">1</div>
<div style="top:748.50px;font-size:11px;line-height:11px;height:11px;color:#2b303b;white-space:pre;left:804.3px;">1</div>
<div style="top:748.50px;font-size:11px;line-height:11px;height:11px;color:#2b303b;white-space:pre;letter-spacing:-0.171px;left:898.3px;">2017-03-11 6:0...</div>
<div style="top:748.50px;font-size:11px;line-height:11px;height:11px;color:#2b303b;white-space:pre;letter-spacing:-0.172px;left:992.3px;">2017-03-13 4:0...</div>
<div style="top:748.50px;font-size:11px;line-height:11px;height:11px;color:#2b303b;white-space:pre;letter-spacing:-0.193px;left:1086.3px;">50.99</div>
<div style="top:748.50px;font-size:11px;line-height:11px;height:11px;color:#2b303b;white-space:pre;letter-spacing:-0.201px;left:1180.3px;">New Westminster</div>
<div style="top:770.50px;font-size:11px;line-height:11px;height:11px;color:#2b303b;white-space:pre;left:428.3px;">3</div>
<div style="top:770.50px;font-size:11px;line-height:11px;height:11px;color:#2b303b;white-space:pre;left:522.3px;">2</div>
<div style="top:770.50px;font-size:11px;line-height:11px;height:11px;color:#2b303b;white-space:pre;left:616.3px;">2</div>
<div style="top:770.50px;font-size:11px;line-height:11px;height:11px;color:#2b303b;white-space:pre;left:710.3px;">2</div>
<div style="top:770.50px;font-size:11px;line-height:11px;height:11px;color:#2b303b;white-space:pre;left:804.3px;">2</div>
<div style="top:770.50px;font-size:11px;line-height:11px;height:11px;color:#2b303b;white-space:pre;letter-spacing:-0.172px;left:898.3px;">2017-03-14 5:0...</div>
<div style="top:770.50px;font-size:11px;line-height:11px;height:11px;color:#2b303b;white-space:pre;letter-spacing:-0.172px;left:992.3px;">2017-03-15 2:0...</div>
<div style="top:770.50px;font-size:11px;line-height:11px;height:11px;color:#2b303b;white-space:pre;letter-spacing:-0.193px;left:1086.3px;">78.99</div>
<div style="top:770.50px;font-size:11px;line-height:11px;height:11px;color:#2b303b;white-space:pre;letter-spacing:-0.193px;left:1180.3px;">Coquitlam</div>
<div style="top:792.50px;font-size:11px;line-height:11px;height:11px;color:#2b303b;white-space:pre;left:428.3px;">4</div>
<div style="top:792.50px;font-size:11px;line-height:11px;height:11px;color:#2b303b;white-space:pre;left:522.3px;">3</div>
<div style="top:792.50px;font-size:11px;line-height:11px;height:11px;color:#2b303b;white-space:pre;left:616.3px;">3</div>
<div style="top:792.50px;font-size:11px;line-height:11px;height:11px;color:#2b303b;white-space:pre;left:710.3px;">3</div>
<div style="top:792.50px;font-size:11px;line-height:11px;height:11px;color:#2b303b;white-space:pre;left:804.3px;">3</div>
<div style="top:792.50px;font-size:11px;line-height:11px;height:11px;color:#2b303b;white-space:pre;letter-spacing:-0.172px;left:898.3px;">2018-04-10 3:0...</div>
<div style="top:792.50px;font-size:11px;line-height:11px;height:11px;color:#2b303b;white-space:pre;letter-spacing:-0.193px;left:1086.3px;">33.99</div>
<div style="top:792.50px;font-size:11px;line-height:11px;height:11px;color:#2b303b;white-space:pre;letter-spacing:-0.193px;left:1180.3px;">Coquitlam</div>
<div style="top:814.50px;font-size:11px;line-height:11px;height:11px;color:#2b303b;white-space:pre;left:428.3px;">5</div>
<div style="top:814.50px;font-size:11px;line-height:11px;height:11px;color:#2b303b;white-space:pre;left:522.3px;">4</div>
<div style="top:814.50px;font-size:11px;line-height:11px;height:11px;color:#2b303b;white-space:pre;left:616.3px;">4</div>
<div style="top:814.50px;font-size:11px;line-height:11px;height:11px;color:#2b303b;white-space:pre;left:710.3px;">4</div>
<div style="top:814.50px;font-size:11px;line-height:11px;height:11px;color:#2b303b;white-space:pre;left:804.3px;">4</div>
<div style="top:814.50px;font-size:11px;line-height:11px;height:11px;color:#2b303b;white-space:pre;letter-spacing:-0.172px;left:898.3px;">2018-03-17 2:3...</div>
<div style="top:814.50px;font-size:11px;line-height:11px;height:11px;color:#2b303b;white-space:pre;letter-spacing:-0.172px;left:992.3px;">2018-03-19 4:2...</div>
<div style="top:814.50px;font-size:11px;line-height:11px;height:11px;color:#2b303b;white-space:pre;letter-spacing:-0.196px;left:1086.3px;">150.87</div>
<div style="top:814.50px;font-size:11px;line-height:11px;height:11px;color:#2b303b;white-space:pre;letter-spacing:-0.201px;left:1180.3px;">New Westminster</div>
<div style="top:836.50px;font-size:11px;line-height:11px;height:11px;color:#2b303b;white-space:pre;left:428.3px;">6</div>
<div style="top:836.50px;font-size:11px;line-height:11px;height:11px;color:#2b303b;white-space:pre;left:522.3px;">5</div>
<div style="top:836.50px;font-size:11px;line-height:11px;height:11px;color:#2b303b;white-space:pre;left:616.3px;">5</div>
<div style="top:836.50px;font-size:11px;line-height:11px;height:11px;color:#2b303b;white-space:pre;left:710.3px;">5</div>
<div style="top:836.50px;font-size:11px;line-height:11px;height:11px;color:#2b303b;white-space:pre;left:804.3px;">5</div>
<div style="top:836.50px;font-size:11px;line-height:11px;height:11px;color:#2b303b;white-space:pre;letter-spacing:-0.172px;left:898.3px;">2018-03-21 2:2...</div>
<div style="top:836.50px;font-size:11px;line-height:11px;height:11px;color:#2b303b;white-space:pre;letter-spacing:-0.172px;left:992.3px;">2018-03-22 5:2...</div>
<div style="top:836.50px;font-size:11px;line-height:11px;height:11px;color:#2b303b;white-space:pre;letter-spacing:-0.196px;left:1086.3px;">129.99</div>
<div style="top:836.50px;font-size:11px;line-height:11px;height:11px;color:#2b303b;white-space:pre;letter-spacing:-0.193px;left:1180.3px;">Coquitlam</div>
<div style="top:858.50px;font-size:11px;line-height:11px;height:11px;color:#2b303b;white-space:pre;left:428.3px;">2</div>
<div style="top:858.50px;font-size:11px;line-height:11px;height:11px;color:#2b303b;white-space:pre;left:522.3px;">1</div>
<div style="top:858.50px;font-size:11px;line-height:11px;height:11px;color:#2b303b;white-space:pre;left:616.3px;">1</div>
<div style="top:858.50px;font-size:11px;line-height:11px;height:11px;color:#2b303b;white-space:pre;left:710.3px;">1</div>
<div style="top:858.50px;font-size:11px;line-height:11px;height:11px;color:#2b303b;white-space:pre;left:804.3px;">1</div>
<div style="top:858.50px;font-size:11px;line-height:11px;height:11px;color:#2b303b;white-space:pre;letter-spacing:-0.171px;left:898.3px;">2018-04-11 3:2...</div>
<div style="top:858.50px;font-size:11px;line-height:11px;height:11px;color:#2b303b;white-space:pre;letter-spacing:-0.196px;left:1086.3px;">200.69</div>
<div style="top:858.50px;font-size:11px;line-height:11px;height:11px;color:#2b303b;white-space:pre;letter-spacing:-0.201px;left:1180.3px;">New Westminster</div>
<svg style="left:390px;top:749px;" width="5" height="9" viewBox="0 0 5 9"><path d="M0 0 L5 4.5 L0 9 Z" fill="#2e3440"/></svg>
<div style="top:548.50px;font-size:11px;line-height:11px;height:11px;color:#2b303b;white-space:pre;letter-spacing:-0.115px;left:968px;">Workshop Location</div>
<div style="left:965px;top:566px;width:122px;height:30px;background:#ffffff;border:1px solid #d8dee9;"></div>
<div style="left:967px;top:568px;width:118px;height:13px;background:#4c566a;"></div>
<div style="top:569.50px;font-size:11px;line-height:11px;height:11px;color:#ffffff;white-space:pre;letter-spacing:-0.225px;left:969.5px;">New Westminster</div>
<div style="top:582.50px;font-size:11px;line-height:11px;height:11px;color:#111111;white-space:pre;letter-spacing:-0.391px;left:968.5px;">Coquitlam</div>
<div style="top:608.50px;font-size:11px;line-height:11px;height:11px;color:#2b303b;white-space:pre;letter-spacing:-0.293px;left:971.5px;">Service Charge</div>
<div style="left:965px;top:626px;width:122px;height:20px;background:#ffffff;border:1px solid #d8dee9;"></div>
<div style="left:966px;top:668px;width:120px;height:21px;background:#e1e1e1;border:1px solid #adadad;"></div>
<div style="top:673.50px;font-size:11px;line-height:11px;height:11px;color:#1d2128;white-space:pre;letter-spacing:-0.178px;left:977.5px;">Create New Service</div>
<div style="left:1157px;top:549px;width:114px;height:21px;background:#e1e1e1;border:1px solid #adadad;"></div>
<div style="top:554.50px;font-size:11px;line-height:11px;height:11px;color:#1d2128;white-space:pre;letter-spacing:-0.178px;left:1176.5px;">Nuke Database</div>
<div style="left:1157px;top:608px;width:114px;height:21px;background:#e1e1e1;border:1px solid #adadad;"></div>
<div style="top:613.50px;font-size:11px;line-height:11px;height:11px;color:#1d2128;white-space:pre;letter-spacing:-0.254px;left:1173.5px;">Update Changes</div>
<div style="left:1157px;top:668px;width:114px;height:21px;background:#e1e1e1;border:1px solid #adadad;"></div>
<div style="top:673.50px;font-size:11px;line-height:11px;height:11px;color:#1d2128;white-space:pre;letter-spacing:-0.228px;left:1167.5px;">End Selected Order</div>
<div style="left:1382px;top:97px;width:307px;height:1076px;background:#252526;border:1px solid #3f3f46;"></div>
<div style="left:1383px;top:98px;width:305px;height:48px;background:#2d2d30;"></div>
<div style="top:102.75px;font-size:12.5px;line-height:12.5px;height:12.5px;color:#f1f1f1;white-space:pre;letter-spacing:-0.299px;left:1387px;">Diagnostic Tools</div>
<svg style="left:1481px;top:107px;" width="151" height="5" viewBox="0 0 151 5"><defs><pattern id="dg1481107" width="4" height="4" patternUnits="userSpaceOnUse"><rect x="0" y="0" width="1" height="1" fill="#46464a"/><rect x="2" y="2" width="1" height="1" fill="#46464a"/></pattern></defs><rect width="151" height="5" fill="url(#dg1481107)"/></svg>
<svg style="left:1640px;top:106px;" width="8" height="4.5" viewBox="0 0 8 4.5"><path d="M0 0 H8 L4 4.5 Z" fill="#f1f1f1"/></svg>
<svg style="left:1657px;top:103px;" width="7" height="11" viewBox="0 0 7 11"><path d="M2 0.5 H5.5 V6.5 M2 0.5 V6.5 M4.5 0.5 V6.5 M0 6.5 H7 M3.5 6.5 V11" stroke="#f1f1f1" stroke-width="1" fill="none"/></svg>
<svg style="left:1672px;top:103.5px;" width="10" height="9" viewBox="0 0 10 9"><path d="M0.8 0.5 L9.2 8.5 M9.2 0.5 L0.8 8.5" stroke="#f1f1f1" stroke-width="1.5"/></svg>
<svg style="left:1392.5px;top:124px;" width="17" height="16" viewBox="0 0 17 16"><path d="M13.41 6.28 L16.04 6.45 L16.04 9.55 L13.41 9.72 L13.16 10.33 L14.90 12.31 L12.71 14.50 L10.73 12.76 L10.12 13.01 L9.95 15.64 L6.85 15.64 L6.68 13.01 L6.07 12.76 L4.09 14.50 L1.90 12.31 L3.64 10.33 L3.39 9.72 L0.76 9.55 L0.76 6.45 L3.39 6.28 L3.64 5.67 L1.90 3.69 L4.09 1.50 L6.07 3.24 L6.68 2.99 L6.85 0.36 L9.95 0.36 L10.12 2.99 L10.73 3.24 L12.71 1.50 L14.90 3.69 L13.16 5.67 Z" fill="none" stroke="#f1f1f1" stroke-width="1.25" stroke-linejoin="round"/><circle cx="8.4" cy="8" r="2.7" fill="none" stroke="#f1f1f1" stroke-width="1.9"/></svg>
<div style="left:1419px;top:121px;width:1px;height:22px;background:#3f3f46;"></div>
<svg style="left:1427px;top:124px;" width="16" height="16" viewBox="0 0 16 16"><path d="M11.2 4 V0.7 H0.7 V15.3 H11.2 V12" fill="none" stroke="#f1f1f1" stroke-width="1.4"/><path d="M11 3.3 H3.2 V12.7 H11" fill="none" stroke="#f1f1f1" stroke-width="1.1"/><path d="M5 6.4 H10.6 V3.6 L15.6 8 L10.6 12.4 V9.6 H5 Z" fill="#0f5db4" stroke="#3f8fe0" stroke-width="0.5"/></svg>
<div style="left:1453px;top:121px;width:1px;height:22px;background:#3f3f46;"></div>
<svg style="left:1460px;top:124px;" width="17" height="16" viewBox="0 0 17 16"><path d="M9.6 9.2 L15.2 14" stroke="#f1f1f1" stroke-width="3.4" stroke-linecap="round"/><path d="M10 9.5 L14.8 13.6" stroke="#3a3a3e" stroke-width="1" stroke-linecap="round"/><circle cx="6.2" cy="5.6" r="4.9" fill="#2d2d30" stroke="#f1f1f1" stroke-width="1.2"/><circle cx="6.2" cy="5.6" r="3.5" fill="none" stroke="#a8a8a8" stroke-width="0.7"/><path d="M3.8 5.6 H8.6 M6.2 3.2 V8" stroke="#1b6fd0" stroke-width="1.4"/></svg>
<svg style="left:1486.5px;top:125px;" width="17" height="16" viewBox="0 0 17 16"><path d="M9.6 9.2 L15 14" stroke="#f1f1f1" stroke-width="3.4" stroke-linecap="round"/><path d="M10 9.5 L14.6 13.6" stroke="#3a3a3e" stroke-width="1" stroke-linecap="round"/><circle cx="6.2" cy="5.6" r="4.9" fill="#2d2d30" stroke="#f1f1f1" stroke-width="1.2"/><circle cx="6.2" cy="5.6" r="3.5" fill="none" stroke="#a8a8a8" stroke-width="0.7"/><path d="M3.8 5.6 H8.6" stroke="#1b6fd0" stroke-width="1.4"/></svg>
<svg style="left:1511px;top:124px;" width="16" height="16" viewBox="0 0 16 16"><path d="M2.6 15.4 V9 H5.6 V15.4 Z M6.6 15.4 V4.6 H9.8 V15.4 Z M10.8 15.4 V8 H14.4 V15.4 Z" fill="#8a8a8a" stroke="#f1f1f1" stroke-width="1"/><path d="M1 3.2 C1.6 0.4 6 0 6.4 2.8 C6.6 4.4 4.6 4.8 4 6.4" fill="none" stroke="#f1f1f1" stroke-width="1.6"/><path d="M0.2 2 L3.4 2.4 L1.6 5 Z" fill="#f1f1f1"/></svg>
<div style="top:150.75px;font-size:12.5px;line-height:12.5px;height:12.5px;color:#f1f1f1;white-space:pre;font-weight:bold;letter-spacing:-0.793px;left:1393px;">Diagnostics session: 59 seconds</div>
<div style="left:1383px;top:167px;width:305px;height:24px;background:#252526;border-top:1px solid #46464a;border-bottom:1px solid #46464a;"></div>
<div style="left:1437px;top:186px;width:1px;height:4px;background:#55555a;"></div>
<div style="left:1462px;top:186px;width:1px;height:4px;background:#55555a;"></div>
<div style="left:1487px;top:186px;width:1px;height:4px;background:#55555a;"></div>
<div style="left:1538px;top:186px;width:1px;height:4px;background:#55555a;"></div>
<div style="left:1563px;top:186px;width:1px;height:4px;background:#55555a;"></div>
<div style="left:1588px;top:186px;width:1px;height:4px;background:#55555a;"></div>
<div style="left:1613px;top:186px;width:1px;height:4px;background:#55555a;"></div>
<div style="left:1512px;top:168px;width:1px;height:22px;background:#4a4a4e;"></div>
<div style="left:1638px;top:168px;width:1px;height:22px;background:#4a4a4e;"></div>
<div style="top:171.00px;font-size:12px;line-height:12px;height:12px;color:#f1f1f1;white-space:pre;letter-spacing:-0.615px;left:1515px;">50s</div>
<div style="top:171.00px;font-size:12px;line-height:12px;height:12px;color:#f1f1f1;white-space:pre;letter-spacing:-0.503px;left:1642px;">1:</div>
<div style="left:1415px;top:168px;width:5px;height:22px;background:#f1f1f1;"></div>
<div style="left:1651px;top:168px;width:5px;height:22px;background:#f1f1f1;"></div>
<svg style="left:1387.8px;top:197.5px;" width="8" height="8" viewBox="0 0 8 8"><path d="M8 0 V8 H0 Z" fill="#c8c8c8"/></svg>
<div style="top:195.75px;font-size:12.5px;line-height:12.5px;height:12.5px;color:#f1f1f1;white-space:pre;font-weight:bold;letter-spacing:-1.081px;left:1400.5px;">Events</div>
<svg style="left:1401px;top:216px;" width="11" height="12" viewBox="0 0 11 12"><rect x="0.6" y="0.6" width="3.8" height="10.4" fill="none" stroke="#f1f1f1" stroke-width="1.2"/><rect x="6" y="0.6" width="3.8" height="10.4" fill="none" stroke="#f1f1f1" stroke-width="1.2"/></svg>
<div style="left:1419px;top:211px;width:233px;height:23px;border:1px solid #4a4a4e;"></div>
<div style="left:1512px;top:212px;width:1px;height:21px;background:#333337;"></div>
<div style="left:1638px;top:212px;width:1px;height:21px;background:#333337;"></div>
<svg style="left:1387.8px;top:243px;" width="8" height="8" viewBox="0 0 8 8"><path d="M8 0 V8 H0 Z" fill="#c8c8c8"/></svg>
<div style="top:240.75px;font-size:12.5px;line-height:12.5px;height:12.5px;color:#f1f1f1;white-space:pre;font-weight:bold;letter-spacing:-0.646px;left:1400.5px;">Process Memory (MB)</div>
<svg style="left:1542px;top:241px;" width="4" height="10" viewBox="0 0 4 10"><path d="M0.5 0 L2 0 L3.2 9.5 L2 9.5 Z" fill="#e8b339"/></svg>
<svg style="left:1555px;top:241px;" width="12" height="10" viewBox="0 0 12 10"><path d="M0 0 H12 L6 10 Z" fill="#3794ff"/></svg>
<div style="top:241.00px;font-size:12px;line-height:12px;height:12px;color:#f1f1f1;white-space:pre;left:1569px;">S</div>
<div style="left:1574px;top:240px;width:4px;height:13px;background:#252526;"></div>
<div style="left:1584px;top:240px;width:12px;height:12px;background:#7eb4d1;border-radius:50%;"></div>
<div style="top:241.00px;font-size:12px;line-height:12px;height:12px;color:#f1f1f1;white-space:pre;letter-spacing:-0.868px;left:1598px;">Pr...</div>
<div style="left:1419px;top:258px;width:233px;height:70px;border:1px solid #4a4a4e;"></div>
<div style="left:1420px;top:266px;width:218px;height:61px;background:#5a7d93;"></div>
<div style="left:1420px;top:265px;width:218px;height:1px;background:#7eb4d1;"></div>
<div style="left:1512px;top:259px;width:1px;height:68px;background:rgba(255,255,255,0.06);"></div>
<div style="left:1638px;top:259px;width:1px;height:68px;background:#333337;"></div>
<div style="top:261.00px;font-size:12px;line-height:12px;height:12px;color:#f1f1f1;white-space:pre;letter-spacing:-0.423px;left:1400.5px;">43</div>
<div style="top:315.00px;font-size:12px;line-height:12px;height:12px;color:#f1f1f1;white-space:pre;left:1407.3px;">0</div>
<div style="top:261.00px;font-size:12px;line-height:12px;height:12px;color:#f1f1f1;white-space:pre;letter-spacing:-0.423px;left:1657px;">43</div>
<div style="top:315.00px;font-size:12px;line-height:12px;height:12px;color:#f1f1f1;white-space:pre;left:1657px;">0</div>
<svg style="left:1387.8px;top:335px;" width="8" height="8" viewBox="0 0 8 8"><path d="M8 0 V8 H0 Z" fill="#c8c8c8"/></svg>
<div style="top:332.75px;font-size:12.5px;line-height:12.5px;height:12.5px;color:#f1f1f1;white-space:pre;font-weight:bold;letter-spacing:-0.692px;left:1400.5px;">CPU (% of all processors)</div>
<div style="left:1419px;top:348px;width:233px;height:70px;border:1px solid #4a4a4e;"></div>
<div style="left:1512px;top:349px;width:1px;height:68px;background:#333337;"></div>
<div style="left:1638px;top:349px;width:1px;height:68px;background:#333337;"></div>
<div style="left:1420px;top:416px;width:218px;height:1px;background:#4a6b80;"></div>
<div style="top:351.00px;font-size:12px;line-height:12px;height:12px;color:#f1f1f1;white-space:pre;letter-spacing:-0.506px;left:1395.5px;">100</div>
<div style="top:405.00px;font-size:12px;line-height:12px;height:12px;color:#f1f1f1;white-space:pre;left:1407.3px;">0</div>
<div style="top:351.00px;font-size:12px;line-height:12px;height:12px;color:#f1f1f1;white-space:pre;letter-spacing:-0.173px;left:1657px;">100</div>
<div style="top:405.00px;font-size:12px;line-height:12px;height:12px;color:#f1f1f1;white-space:pre;left:1657px;">0</div>
<div style="left:1383px;top:437px;width:305px;height:3px;background:#3a3a3e;"></div>
<div style="left:1387px;top:444px;width:63px;height:18px;background:#3f3f46;"></div>
<div style="top:447.75px;font-size:12.5px;line-height:12.5px;height:12.5px;color:#f1f1f1;white-space:pre;letter-spacing:-0.354px;left:1393px;">Summary</div>
<div style="top:447.75px;font-size:12.5px;line-height:12.5px;height:12.5px;color:#f1f1f1;white-space:pre;letter-spacing:-0.785px;left:1456.5px;">Events</div>
<div style="top:447.75px;font-size:12.5px;line-height:12.5px;height:12.5px;color:#f1f1f1;white-space:pre;letter-spacing:-0.437px;left:1502.5px;">Memory Usage</div>
<div style="top:447.75px;font-size:12.5px;line-height:12.5px;height:12.5px;color:#f1f1f1;white-space:pre;letter-spacing:-0.944px;left:1594.5px;">CPU Usage</div>
<div style="left:1383px;top:462px;width:305px;height:2px;background:#3f3f46;"></div>
<div style="top:470.75px;font-size:12.5px;line-height:12.5px;height:12.5px;color:#f1f1f1;white-space:pre;font-weight:bold;letter-spacing:-1.081px;left:1392.5px;">Events</div>
<div style="left:1383px;top:487px;width:305px;height:1px;background:#3f3f46;"></div>
<svg style="left:1397px;top:498px;" width="14" height="8" viewBox="0 0 14 8"><path d="M2.5 0.8 L4.8 4 L2.5 7.2 L0.4 4 Z M7 0.8 L9.2 4 L7 7.2 L4.8 4 Z M11.5 0.8 L13.6 4 L11.5 7.2 L9.2 4 Z" fill="#f1f1f1" stroke="#f1f1f1" stroke-width="0.6"/><circle cx="2.5" cy="4" r="0.8" fill="#252526"/><circle cx="7" cy="4" r="0.8" fill="#252526"/><circle cx="11.5" cy="4" r="0.8" fill="#252526"/></svg>
<div style="top:496.75px;font-size:12.5px;line-height:12.5px;height:12.5px;color:#f1f1f1;white-space:pre;letter-spacing:-0.426px;left:1419px;">Show Events (0 of 0)</div>
<div style="left:1383px;top:516px;width:305px;height:1px;background:#3f3f46;"></div>
<div style="top:522.75px;font-size:12.5px;line-height:12.5px;height:12.5px;color:#f1f1f1;white-space:pre;font-weight:bold;letter-spacing:-0.618px;left:1392.5px;">Memory Usage</div>
<div style="left:1383px;top:539px;width:305px;height:1px;background:#3f3f46;"></div>
<svg style="left:1397px;top:549px;" width="14" height="11" viewBox="0 0 14 11"><rect x="0.6" y="1.6" width="12.8" height="8.8" fill="none" stroke="#f1f1f1" stroke-width="1.1"/><circle cx="7.5" cy="6" r="2.3" fill="none" stroke="#f1f1f1" stroke-width="1.1"/><path d="M2.5 1.5 V0.5 H5 V1.5" stroke="#f1f1f1" stroke-width="1" fill="none"/></svg>
<div style="top:548.75px;font-size:12.5px;line-height:12.5px;height:12.5px;color:#f1f1f1;white-space:pre;letter-spacing:-0.399px;left:1419px;">Take Snapshot</div>
<div style="left:1383px;top:568px;width:305px;height:1px;background:#3f3f46;"></div>
<div style="top:574.75px;font-size:12.5px;line-height:12.5px;height:12.5px;color:#f1f1f1;white-space:pre;font-weight:bold;letter-spacing:-0.931px;left:1392.5px;">CPU Usage</div>
<div style="left:1383px;top:591px;width:305px;height:1px;background:#3f3f46;"></div>
<svg style="left:1400px;top:601px;" width="10" height="10" viewBox="0 0 10 10"><circle cx="5" cy="5" r="4" fill="#3a3a3e" stroke="#f1f1f1" stroke-width="1.1"/></svg>
<div style="top:600.75px;font-size:12.5px;line-height:12.5px;height:12.5px;color:#f1f1f1;white-space:pre;letter-spacing:-0.476px;left:1419px;">Record CPU Profile</div>
<div style="left:1711px;top:97.5px;transform-origin:0 0;transform:rotate(90deg);font-size:12.5px;line-height:17px;height:17px;white-space:pre;color:#e0e0e0;letter-spacing:-0.334px;">Solution Explorer</div>
<div style="left:1714px;top:97px;width:3px;height:90px;background:#3f3f46;"></div>
<div style="left:1711px;top:196.5px;transform-origin:0 0;transform:rotate(90deg);font-size:12.5px;line-height:17px;height:17px;white-space:pre;color:#e0e0e0;letter-spacing:-0.334px;">Git Changes</div>
<div style="left:1714px;top:195px;width:3px;height:68px;background:#3f3f46;"></div>
<div style="left:6px;top:1179px;width:836px;height:172px;background:#2a2a2c;border:1px solid #3f3f46;"></div>
<div style="left:7px;top:1180px;width:834px;height:24px;background:#2d2d30;"></div>
<div style="top:1184.75px;font-size:12.5px;line-height:12.5px;height:12.5px;color:#f1f1f1;white-space:pre;letter-spacing:-0.293px;left:11.5px;">Autos</div>
<svg style="left:50px;top:1189px;" width="733" height="5" viewBox="0 0 733 5"><defs><pattern id="dg501189" width="4" height="4" patternUnits="userSpaceOnUse"><rect x="0" y="0" width="1" height="1" fill="#46464a"/><rect x="2" y="2" width="1" height="1" fill="#46464a"/></pattern></defs><rect width="733" height="5" fill="url(#dg501189)"/></svg>
<svg style="left:793px;top:1188px;" width="8" height="4.5" viewBox="0 0 8 4.5"><path d="M0 0 H8 L4 4.5 Z" fill="#f1f1f1"/></svg>
<svg style="left:810px;top:1185px;" width="7" height="11" viewBox="0 0 7 11"><path d="M2 0.5 H5.5 V6.5 M2 0.5 V6.5 M4.5 0.5 V6.5 M0 6.5 H7 M3.5 6.5 V11" stroke="#f1f1f1" stroke-width="1" fill="none"/></svg>
<svg style="left:825px;top:1185.5px;" width="10" height="9" viewBox="0 0 10 9"><path d="M0.8 0.5 L9.2 8.5 M9.2 0.5 L0.8 8.5" stroke="#f1f1f1" stroke-width="1.5"/></svg>
<div style="left:7px;top:1204px;width:834px;height:23px;background:#2d2d30;"></div>
<div style="left:8px;top:1204px;width:224px;height:20px;background:#333337;border:1px solid #3f3f46;"></div>
<div style="left:220px;top:1205px;width:11px;height:18px;background:#3f3f46;"></div>
<div style="top:1207.75px;font-size:12.5px;line-height:12.5px;height:12.5px;color:#999999;white-space:pre;letter-spacing:-0.499px;left:12px;">Search (Ctrl+E)</div>
<svg style="left:203px;top:1207px;" width="14" height="14" viewBox="0 0 14 14"><circle cx="9" cy="5" r="3.4" fill="none" stroke="#f1f1f1" stroke-width="2"/><path d="M6.6 7.4 L1.6 12.4" stroke="#f1f1f1" stroke-width="2.4" stroke-linecap="round"/></svg>
<svg style="left:221.5px;top:1212px;" width="6" height="4" viewBox="0 0 6 4"><path d="M0 0 H6 L3.0 3.5 Z" fill="#f1f1f1"/></svg>
<svg style="left:240px;top:1209px;" width="14" height="10" viewBox="0 0 14 10"><path d="M13.5 5 H1.5 M5.5 1 L1.5 5 L5.5 9" fill="none" stroke="#5a5a5e" stroke-width="1.9"/></svg>
<svg style="left:261.5px;top:1209px;" width="14" height="10" viewBox="0 0 14 10"><path d="M0.5 5 H12.5 M8.5 1 L12.5 5 L8.5 9" fill="none" stroke="#5a5a5e" stroke-width="1.9"/></svg>
<div style="top:1208.75px;font-size:12.5px;line-height:12.5px;height:12.5px;color:#6d6d6d;white-space:pre;letter-spacing:-0.569px;left:282.5px;">Search Depth:</div>
<div style="left:361px;top:1205px;width:40px;height:19px;background:#2d2d30;border:1px solid #434346;"></div>
<div style="top:1208.75px;font-size:12.5px;line-height:12.5px;height:12.5px;color:#6d6d6d;white-space:pre;left:366px;">3</div>
<svg style="left:391px;top:1213px;" width="5" height="4" viewBox="0 0 5 4"><path d="M0 0 H5 L2.5 3.5 Z" fill="#4a4a4e"/></svg>
<div style="left:7px;top:1227px;width:817px;height:20px;background:#2d2d30;border-bottom:1px solid #38383c;"></div>
<div style="left:15px;top:1228px;width:1px;height:18px;background:#333337;"></div>
<div style="left:284px;top:1228px;width:1px;height:18px;background:#3a3a3e;"></div>
<div style="left:687px;top:1228px;width:1px;height:18px;background:#3a3a3e;"></div>
<div style="top:1230.75px;font-size:12.5px;line-height:12.5px;height:12.5px;color:#999999;white-space:pre;letter-spacing:-0.335px;left:21px;">Name</div>
<div style="top:1230.75px;font-size:12.5px;line-height:12.5px;height:12.5px;color:#999999;white-space:pre;letter-spacing:-0.308px;left:289px;">Value</div>
<div style="top:1230.75px;font-size:12.5px;line-height:12.5px;height:12.5px;color:#999999;white-space:pre;letter-spacing:-0.524px;left:693px;">Type</div>
<div style="left:824px;top:1227px;width:17px;height:123px;background:#3e3e42;"></div>
<svg style="left:828px;top:1233px;" width="9" height="5" viewBox="0 0 9 5"><path d="M0 5 L4.5 0 L9 5 Z" fill="#55555a"/></svg>
<svg style="left:828px;top:1339px;" width="9" height="5" viewBox="0 0 9 5"><path d="M0 0 L4.5 5 L9 0 Z" fill="#55555a"/></svg>
<div style="left:6px;top:1350px;width:43px;height:21px;background:#252526;border:1px solid #3f3f46;border-top:none;"></div>
<div style="top:1353.75px;font-size:12.5px;line-height:12.5px;height:12.5px;color:#0097fb;white-space:pre;letter-spacing:-0.293px;left:12px;">Autos</div>
<div style="top:1353.75px;font-size:12.5px;line-height:12.5px;height:12.5px;color:#f1f1f1;white-space:pre;letter-spacing:-0.522px;left:55px;">Locals</div>
<div style="top:1353.75px;font-size:12.5px;line-height:12.5px;height:12.5px;color:#f1f1f1;white-space:pre;letter-spacing:-0.412px;left:100px;">Watch 1</div>
<div style="left:848px;top:1179px;width:843px;height:172px;background:#2a2a2c;border:1px solid #3f3f46;"></div>
<div style="left:849px;top:1180px;width:841px;height:21px;background:#2d2d30;"></div>
<div style="top:1184.75px;font-size:12.5px;line-height:12.5px;height:12.5px;color:#f1f1f1;white-space:pre;letter-spacing:-0.577px;left:853.5px;">Call Stack</div>
<svg style="left:911px;top:1189px;" width="722" height="5" viewBox="0 0 722 5"><defs><pattern id="dg9111189" width="4" height="4" patternUnits="userSpaceOnUse"><rect x="0" y="0" width="1" height="1" fill="#46464a"/><rect x="2" y="2" width="1" height="1" fill="#46464a"/></pattern></defs><rect width="722" height="5" fill="url(#dg9111189)"/></svg>
<svg style="left:1641px;top:1188px;" width="8" height="4.5" viewBox="0 0 8 4.5"><path d="M0 0 H8 L4 4.5 Z" fill="#f1f1f1"/></svg>
<svg style="left:1658px;top:1185px;" width="7" height="11" viewBox="0 0 7 11"><path d="M2 0.5 H5.5 V6.5 M2 0.5 V6.5 M4.5 0.5 V6.5 M0 6.5 H7 M3.5 6.5 V11" stroke="#f1f1f1" stroke-width="1" fill="none"/></svg>
<svg style="left:1673px;top:1185.5px;" width="10" height="9" viewBox="0 0 10 9"><path d="M0.8 0.5 L9.2 8.5 M9.2 0.5 L0.8 8.5" stroke="#f1f1f1" stroke-width="1.5"/></svg>
<div style="left:849px;top:1201px;width:824px;height:20px;background:#2d2d30;border-bottom:1px solid #38383c;"></div>
<div style="left:865px;top:1202px;width:1px;height:17px;background:#3a3a3e;"></div>
<div style="left:1641px;top:1202px;width:1px;height:17px;background:#3a3a3e;"></div>
<div style="top:1204.75px;font-size:12.5px;line-height:12.5px;height:12.5px;color:#7a7a7a;white-space:pre;letter-spacing:-0.460px;left:871.5px;">Name</div>
<div style="top:1204.75px;font-size:12.5px;line-height:12.5px;height:12.5px;color:#7a7a7a;white-space:pre;letter-spacing:-0.701px;left:1648.5px;width:24px;overflow:hidden;">Lang</div>
<div style="left:1673px;top:1201px;width:17px;height:149px;background:#3e3e42;"></div>
<svg style="left:1677px;top:1207px;" width="9" height="5" viewBox="0 0 9 5"><path d="M0 5 L4.5 0 L9 5 Z" fill="#55555a"/></svg>
<svg style="left:1677px;top:1339px;" width="9" height="5" viewBox="0 0 9 5"><path d="M0 0 L4.5 5 L9 0 Z" fill="#55555a"/></svg>
<div style="left:848px;top:1350px;width:62px;height:21px;background:#252526;border:1px solid #3f3f46;border-top:none;"></div>
<div style="top:1353.75px;font-size:12.5px;line-height:12.5px;height:12.5px;color:#0097fb;white-space:pre;letter-spacing:-0.577px;left:854.5px;">Call Stack</div>
<div style="top:1353.75px;font-size:12.5px;line-height:12.5px;height:12.5px;color:#f1f1f1;white-space:pre;letter-spacing:-0.364px;left:917px;">Breakpoints</div>
<div style="top:1353.75px;font-size:12.5px;line-height:12.5px;height:12.5px;color:#f1f1f1;white-space:pre;letter-spacing:-0.363px;left:991px;">Exception Settings</div>
<div style="top:1353.75px;font-size:12.5px;line-height:12.5px;height:12.5px;color:#f1f1f1;white-space:pre;letter-spacing:-0.149px;left:1100.5px;">Command Window</div>
<div style="top:1353.75px;font-size:12.5px;line-height:12.5px;height:12.5px;color:#f1f1f1;white-space:pre;letter-spacing:-0.143px;left:1216px;">Immediate Window</div>
<div style="top:1353.75px;font-size:12.5px;line-height:12.5px;height:12.5px;color:#f1f1f1;white-space:pre;letter-spacing:-0.087px;left:1332.5px;">Output</div>
<div style="top:1353.75px;font-size:12.5px;line-height:12.5px;height:12.5px;color:#f1f1f1;white-space:pre;letter-spacing:-0.520px;left:1382.5px;">Error List</div>
<div style="left:1699px;top:1315px;width:42px;height:42px;background:#000000;border-radius:50%;border:1px solid #5f8294;box-shadow:0 0 2px rgba(0,0,0,0.8);"></div>
<svg style="left:1712.5px;top:1331px;" width="6" height="10" viewBox="0 0 6 10"><path d="M6 0 L0 5 L6 10 L6 7.4 L3.2 5 L6 2.6 Z" fill="#9a9a9a"/></svg>
<div style="left:0px;top:1377px;width:1717px;height:23px;background:#ca5100;"></div>
<svg style="left:4.5px;top:1384px;" width="16" height="11" viewBox="0 0 16 11"><path d="M3 0.7 H15 L12.5 10.3 H0.7 Z" fill="none" stroke="#ffffff" stroke-width="1.3"/></svg>
<div style="top:1382.75px;font-size:12.5px;line-height:12.5px;height:12.5px;color:#ffffff;white-space:pre;letter-spacing:-0.926px;left:28.5px;">Ready</div>
<svg style="left:1511px;top:1383px;" width="9" height="12" viewBox="0 0 9 12"><path d="M4.5 11.5 V1.5 M0.8 5 L4.5 1.2 L8.2 5" fill="none" stroke="#ffffff" stroke-width="1.5"/></svg>
<div style="top:1382.75px;font-size:12.5px;line-height:12.5px;height:12.5px;color:#ffffff;white-space:pre;letter-spacing:-0.237px;left:1530px;">Add to Source Control</div>
<svg style="left:1654px;top:1386px;" width="8" height="5" viewBox="0 0 8 5"><path d="M0 5 L4 0 L8 5 Z" fill="#ffffff"/></svg>
<svg style="left:1682px;top:1381px;" width="22" height="17" viewBox="0 0 22 17"><path d="M5.5 0 C8.5 0 10 2 10 4.5 V8 L11.5 10.5 H-0.5 L1 8 V4.5 C1 2 2.5 0 5.5 0 Z" fill="#dcdcdc"/><path d="M3.8 11.5 H7.2 C7.2 14 3.8 14 3.8 11.5Z" fill="#dcdcdc"/><circle cx="14.2" cy="11" r="5.7" fill="#ffffff"/><text x="11.4" y="14.6" font-size="10.5" font-family="Liberation Sans" fill="#000000">2</text></svg>
</body></html>
